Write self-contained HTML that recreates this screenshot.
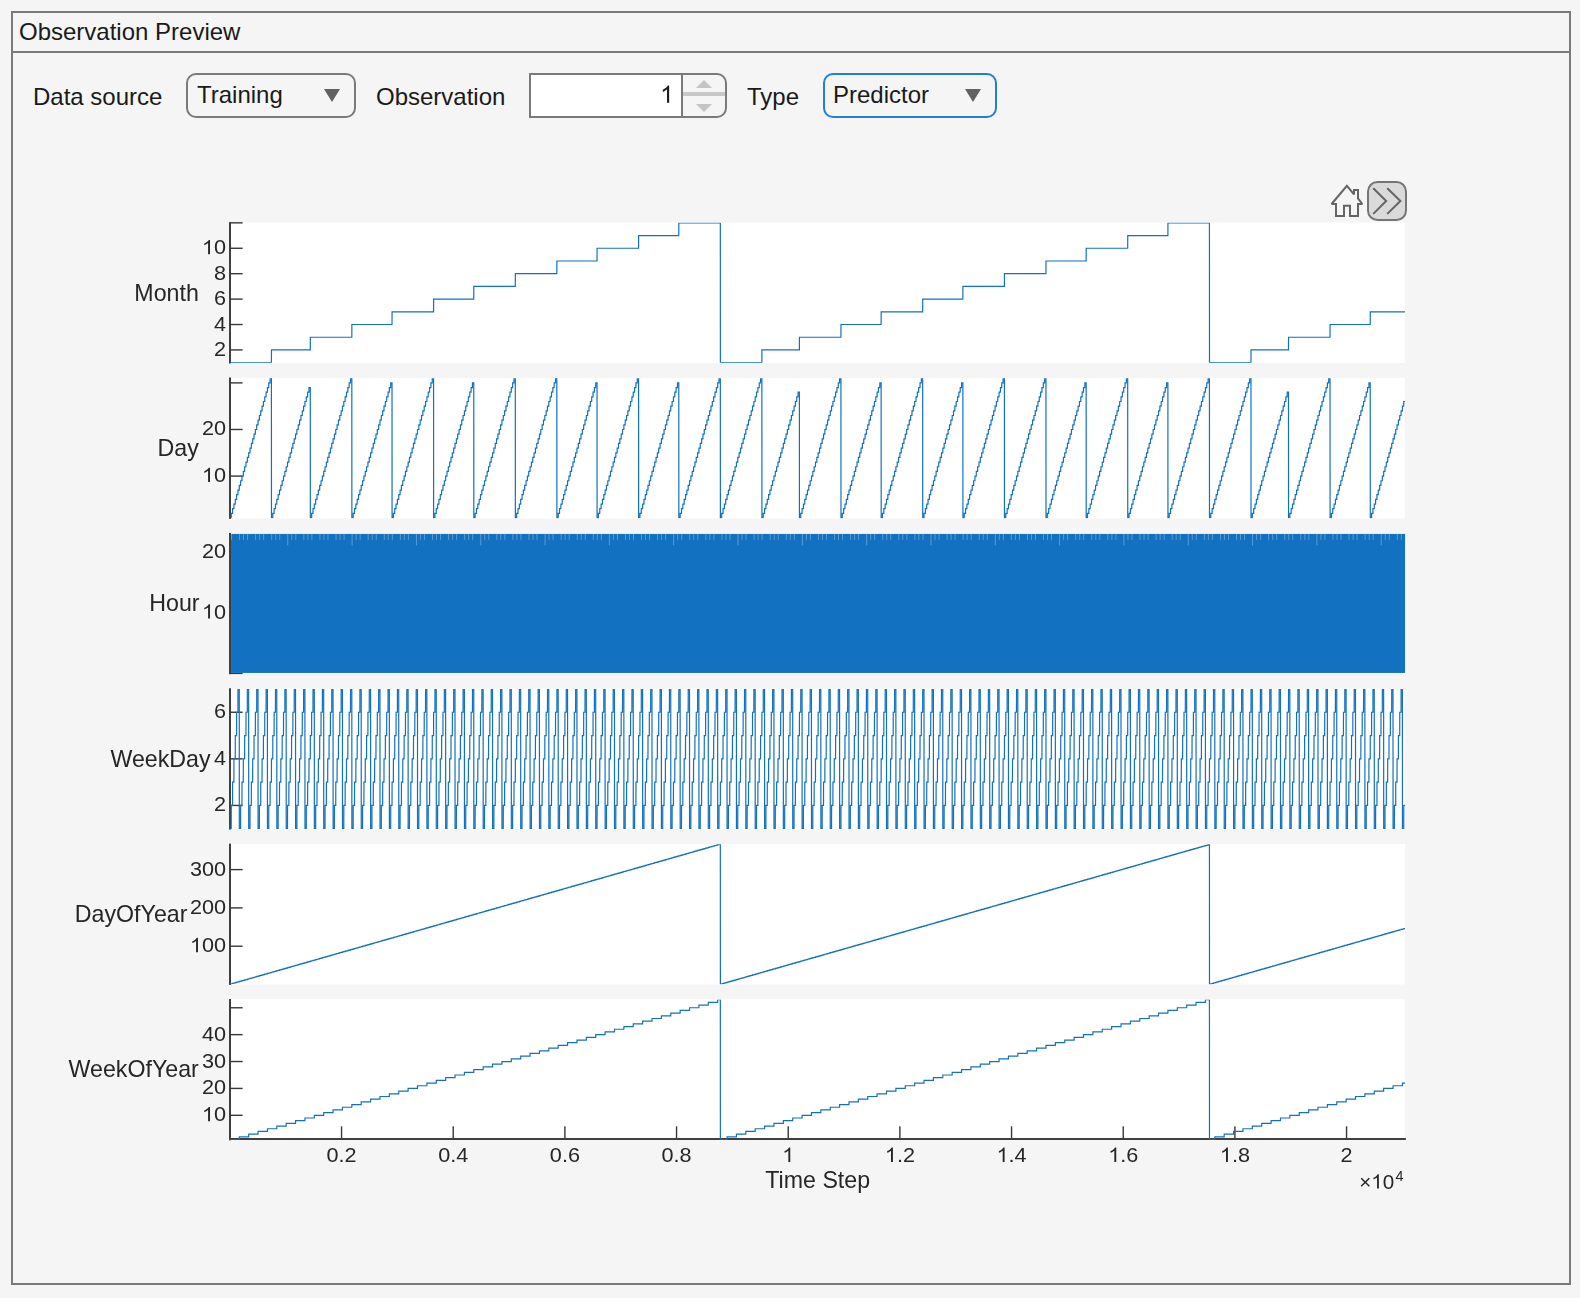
<!DOCTYPE html>
<html><head><meta charset="utf-8"><title>Observation Preview</title>
<style>
html,body{margin:0;padding:0}
body{width:1580px;height:1298px;background:#f5f5f5;position:relative;overflow:hidden;font-family:"Liberation Sans",sans-serif;color:#1a1a1a}
.panel{position:absolute;left:11px;top:11px;width:1556px;height:1270px;border:2px solid #7a7a7a}
.sep{position:absolute;left:13px;top:51px;width:1556px;height:2px;background:#7a7a7a}
.t{position:absolute;white-space:nowrap;font-size:24px;line-height:28px}
.dd{position:absolute;box-sizing:border-box;border:2px solid #7a7a7a;border-radius:10px;height:45px;top:73px;background:#f5f5f5}
.tri{position:absolute;width:0;height:0;border-left:8px solid transparent;border-right:8px solid transparent;border-top:13px solid #616161}
svg text{font-family:"Liberation Sans",sans-serif}
</style></head><body>
<div class="panel"></div><div class="sep"></div>
<div class="t" style="left:19px;top:18px">Observation Preview</div>
<div class="t" style="left:33px;top:83px">Data source</div>
<div class="dd" style="left:186px;width:170px"></div>
<div class="t" style="left:197px;top:81px">Training</div>
<div class="tri" style="left:324px;top:89px"></div>
<div class="t" style="left:376px;top:83px">Observation</div>
<div style="position:absolute;left:529px;top:73px;width:198px;height:45px;box-sizing:border-box;border:2px solid #7a7a7a;border-radius:0 10px 10px 0;background:#f5f5f5"></div>
<div style="position:absolute;left:531px;top:75px;width:150px;height:41px;background:#fff;border-right:2px solid #7a7a7a"></div>
<div style="position:absolute;left:683px;top:92px;width:42px;height:4px;background:#c8c8c8"></div>
<div class="tri" style="left:696px;top:80px;border-left-width:8px;border-right-width:8px;border-top:0;border-bottom:8px solid #c4c4c4"></div>
<div class="tri" style="left:696px;top:104px;border-left-width:8px;border-right-width:8px;border-top:8px solid #c4c4c4"></div>
<div class="t" style="left:747px;top:83px">Type</div>
<div class="dd" style="left:823px;width:174px;border-color:#1f7fd9"></div>
<div class="t" style="left:833px;top:81px">Predictor</div>
<div class="tri" style="left:965px;top:89px"></div>
<svg width="1580" height="1298" style="position:absolute;left:0;top:0;will-change:transform">
<defs>
<clipPath id="c0"><rect x="229.28" y="222.85" width="1175.99" height="139.95"/></clipPath>
<clipPath id="c1"><rect x="229.28" y="378.22" width="1175.99" height="139.95"/></clipPath>
<clipPath id="c2"><rect x="229.28" y="533.59" width="1175.99" height="139.95"/></clipPath>
<clipPath id="c3"><rect x="229.28" y="688.96" width="1175.99" height="139.95"/></clipPath>
<clipPath id="c4"><rect x="229.28" y="844.33" width="1175.99" height="139.95"/></clipPath>
<clipPath id="c5"><rect x="229.28" y="999.7" width="1175.99" height="139.95"/></clipPath>
</defs>
<rect x="229.88" y="222.55" width="1175.19" height="140.5" fill="#fff"/>
<rect x="229.88" y="377.92" width="1175.19" height="140.5" fill="#fff"/>
<rect x="229.88" y="533.29" width="1175.19" height="140.5" fill="#fff"/>
<rect x="229.88" y="688.66" width="1175.19" height="140.5" fill="#fff"/>
<rect x="229.88" y="844.03" width="1175.19" height="140.5" fill="#fff"/>
<rect x="229.88" y="999.4" width="1175.19" height="140.5" fill="#fff"/>
<rect x="229" y="222.15" width="2" height="141.3" fill="#404040"/>
<rect x="230" y="349.24" width="12.6" height="1.4" fill="#383838"/>
<g transform="translate(226 355.94) scale(1.05 1)" fill="#262626"><text x="-11.46" y="0" font-size="20.6">2</text></g>
<rect x="230" y="323.82" width="12.6" height="1.4" fill="#383838"/>
<g transform="translate(226 330.52) scale(1.05 1)" fill="#262626"><text x="-11.46" y="0" font-size="20.6">4</text></g>
<rect x="230" y="298.4" width="12.6" height="1.4" fill="#383838"/>
<g transform="translate(226 305.1) scale(1.05 1)" fill="#262626"><text x="-11.46" y="0" font-size="20.6">6</text></g>
<rect x="230" y="272.99" width="12.6" height="1.4" fill="#383838"/>
<g transform="translate(226 279.69) scale(1.05 1)" fill="#262626"><text x="-11.46" y="0" font-size="20.6">8</text></g>
<rect x="230" y="247.57" width="12.6" height="1.4" fill="#383838"/>
<g transform="translate(226 254.27) scale(1.05 1)" fill="#262626"><path transform="translate(-22.91 0) scale(0.010059 -0.009772)" d="M583 0V1147Q518 1085 412 1023Q307 961 223 930V1104Q374 1175 487 1276Q600 1377 647 1472H763V0Z"/><text x="-11.46" y="0" font-size="20.6">0</text></g>
<rect x="230" y="222.15" width="12.6" height="1.4" fill="#383838"/>
<text x="198.8" y="300.85" font-size="23.2" text-anchor="end" fill="#262626">Month</text>
<rect x="229" y="377.52" width="2" height="141.3" fill="#404040"/>
<rect x="230" y="475.38" width="12.6" height="1.4" fill="#383838"/>
<g transform="translate(226 482.08) scale(1.05 1)" fill="#262626"><path transform="translate(-22.91 0) scale(0.010059 -0.009772)" d="M583 0V1147Q518 1085 412 1023Q307 961 223 930V1104Q374 1175 487 1276Q600 1377 647 1472H763V0Z"/><text x="-11.46" y="0" font-size="20.6">0</text></g>
<rect x="230" y="428.78" width="12.6" height="1.4" fill="#383838"/>
<g transform="translate(226 435.48) scale(1.05 1)" fill="#262626"><text x="-22.91" y="0" font-size="20.6">20</text></g>
<rect x="230" y="382.18" width="12.6" height="1.4" fill="#383838"/>
<text x="198.8" y="455.72" font-size="23.2" text-anchor="end" fill="#262626">Day</text>
<rect x="229" y="532.89" width="2" height="141.3" fill="#404040"/>
<rect x="230" y="672.69" width="12.6" height="1.4" fill="#383838"/>
<rect x="230" y="611.91" width="12.6" height="1.4" fill="#383838"/>
<g transform="translate(226 618.61) scale(1.05 1)" fill="#262626"><path transform="translate(-22.91 0) scale(0.010059 -0.009772)" d="M583 0V1147Q518 1085 412 1023Q307 961 223 930V1104Q374 1175 487 1276Q600 1377 647 1472H763V0Z"/><text x="-11.46" y="0" font-size="20.6">0</text></g>
<rect x="230" y="551.12" width="12.6" height="1.4" fill="#383838"/>
<g transform="translate(226 557.82) scale(1.05 1)" fill="#262626"><text x="-22.91" y="0" font-size="20.6">20</text></g>
<text x="199.6" y="610.59" font-size="23.2" text-anchor="end" fill="#262626">Hour</text>
<rect x="229" y="688.26" width="2" height="141.3" fill="#404040"/>
<rect x="230" y="804.76" width="12.6" height="1.4" fill="#383838"/>
<g transform="translate(226 811.46) scale(1.05 1)" fill="#262626"><text x="-11.46" y="0" font-size="20.6">2</text></g>
<rect x="230" y="758.16" width="12.6" height="1.4" fill="#383838"/>
<g transform="translate(226 764.86) scale(1.05 1)" fill="#262626"><text x="-11.46" y="0" font-size="20.6">4</text></g>
<rect x="230" y="711.56" width="12.6" height="1.4" fill="#383838"/>
<g transform="translate(226 718.26) scale(1.05 1)" fill="#262626"><text x="-11.46" y="0" font-size="20.6">6</text></g>
<text x="210.6" y="766.96" font-size="23.2" text-anchor="end" fill="#262626">WeekDay</text>
<rect x="229" y="843.63" width="2" height="141.3" fill="#404040"/>
<rect x="230" y="945.51" width="12.6" height="1.4" fill="#383838"/>
<g transform="translate(226 952.21) scale(1.05 1)" fill="#262626"><path transform="translate(-34.37 0) scale(0.010059 -0.009772)" d="M583 0V1147Q518 1085 412 1023Q307 961 223 930V1104Q374 1175 487 1276Q600 1377 647 1472H763V0Z"/><text x="-22.91" y="0" font-size="20.6">00</text></g>
<rect x="230" y="907.21" width="12.6" height="1.4" fill="#383838"/>
<g transform="translate(226 913.91) scale(1.05 1)" fill="#262626"><text x="-34.37" y="0" font-size="20.6">200</text></g>
<rect x="230" y="868.91" width="12.6" height="1.4" fill="#383838"/>
<g transform="translate(226 875.61) scale(1.05 1)" fill="#262626"><text x="-34.37" y="0" font-size="20.6">300</text></g>
<text x="187.4" y="921.73" font-size="23.2" text-anchor="end" fill="#262626">DayOfYear</text>
<rect x="229" y="999" width="2" height="141.3" fill="#404040"/>
<rect x="230" y="1114.6" width="12.6" height="1.4" fill="#383838"/>
<g transform="translate(226 1121.3) scale(1.05 1)" fill="#262626"><path transform="translate(-22.91 0) scale(0.010059 -0.009772)" d="M583 0V1147Q518 1085 412 1023Q307 961 223 930V1104Q374 1175 487 1276Q600 1377 647 1472H763V0Z"/><text x="-11.46" y="0" font-size="20.6">0</text></g>
<rect x="230" y="1087.72" width="12.6" height="1.4" fill="#383838"/>
<g transform="translate(226 1094.42) scale(1.05 1)" fill="#262626"><text x="-22.91" y="0" font-size="20.6">20</text></g>
<rect x="230" y="1060.83" width="12.6" height="1.4" fill="#383838"/>
<g transform="translate(226 1067.53) scale(1.05 1)" fill="#262626"><text x="-22.91" y="0" font-size="20.6">30</text></g>
<rect x="230" y="1033.95" width="12.6" height="1.4" fill="#383838"/>
<g transform="translate(226 1040.65) scale(1.05 1)" fill="#262626"><text x="-22.91" y="0" font-size="20.6">40</text></g>
<rect x="230" y="1007.07" width="12.6" height="1.4" fill="#383838"/>
<text x="198.8" y="1076.6" font-size="23.2" text-anchor="end" fill="#262626">WeekOfYear</text>
<rect x="229" y="1138" width="1176.87" height="2" fill="#404040"/>
<rect x="340.85" y="1126.3" width="1.4" height="12" fill="#383838"/>
<g transform="translate(341.55 1161.9) scale(1.05 1)" fill="#262626"><text x="-14.32" y="0" font-size="20.6">0.2</text></g>
<rect x="452.52" y="1126.3" width="1.4" height="12" fill="#383838"/>
<g transform="translate(453.22 1161.9) scale(1.05 1)" fill="#262626"><text x="-14.32" y="0" font-size="20.6">0.4</text></g>
<rect x="564.18" y="1126.3" width="1.4" height="12" fill="#383838"/>
<g transform="translate(564.88 1161.9) scale(1.05 1)" fill="#262626"><text x="-14.32" y="0" font-size="20.6">0.6</text></g>
<rect x="675.85" y="1126.3" width="1.4" height="12" fill="#383838"/>
<g transform="translate(676.55 1161.9) scale(1.05 1)" fill="#262626"><text x="-14.32" y="0" font-size="20.6">0.8</text></g>
<rect x="787.52" y="1126.3" width="1.4" height="12" fill="#383838"/>
<g transform="translate(788.22 1161.9) scale(1.05 1)" fill="#262626"><path transform="translate(-5.73 0) scale(0.010059 -0.009772)" d="M583 0V1147Q518 1085 412 1023Q307 961 223 930V1104Q374 1175 487 1276Q600 1377 647 1472H763V0Z"/></g>
<rect x="899.19" y="1126.3" width="1.4" height="12" fill="#383838"/>
<g transform="translate(899.89 1161.9) scale(1.05 1)" fill="#262626"><path transform="translate(-14.32 0) scale(0.010059 -0.009772)" d="M583 0V1147Q518 1085 412 1023Q307 961 223 930V1104Q374 1175 487 1276Q600 1377 647 1472H763V0Z"/><text x="-2.86" y="0" font-size="20.6">.2</text></g>
<rect x="1010.86" y="1126.3" width="1.4" height="12" fill="#383838"/>
<g transform="translate(1011.56 1161.9) scale(1.05 1)" fill="#262626"><path transform="translate(-14.32 0) scale(0.010059 -0.009772)" d="M583 0V1147Q518 1085 412 1023Q307 961 223 930V1104Q374 1175 487 1276Q600 1377 647 1472H763V0Z"/><text x="-2.86" y="0" font-size="20.6">.4</text></g>
<rect x="1122.52" y="1126.3" width="1.4" height="12" fill="#383838"/>
<g transform="translate(1123.22 1161.9) scale(1.05 1)" fill="#262626"><path transform="translate(-14.32 0) scale(0.010059 -0.009772)" d="M583 0V1147Q518 1085 412 1023Q307 961 223 930V1104Q374 1175 487 1276Q600 1377 647 1472H763V0Z"/><text x="-2.86" y="0" font-size="20.6">.6</text></g>
<rect x="1234.19" y="1126.3" width="1.4" height="12" fill="#383838"/>
<g transform="translate(1234.89 1161.9) scale(1.05 1)" fill="#262626"><path transform="translate(-14.32 0) scale(0.010059 -0.009772)" d="M583 0V1147Q518 1085 412 1023Q307 961 223 930V1104Q374 1175 487 1276Q600 1377 647 1472H763V0Z"/><text x="-2.86" y="0" font-size="20.6">.8</text></g>
<rect x="1345.86" y="1126.3" width="1.4" height="12" fill="#383838"/>
<g transform="translate(1346.56 1161.9) scale(1.05 1)" fill="#262626"><text x="-5.73" y="0" font-size="20.6">2</text></g>
<text x="817.7" y="1187.8" font-size="23.2" text-anchor="middle" fill="#262626">Time Step</text>
<g transform="translate(1394.1 1188.6) scale(1.0 1)" fill="#262626"><text x="-34.94" y="0" font-size="20.6">×</text><path transform="translate(-22.91 0) scale(0.010059 -0.009772)" d="M583 0V1147Q518 1085 412 1023Q307 961 223 930V1104Q374 1175 487 1276Q600 1377 647 1472H763V0Z"/><text x="-11.46" y="0" font-size="20.6">0</text></g>
<text x="1395.6" y="1181" font-size="14.4" fill="#262626">4</text>
<g fill="none" stroke="#1171BE" stroke-width="1.2" stroke-linejoin="miter">
<path clip-path="url(#c0)" d="M229.94 362.65 L271.42 362.65 L271.48 349.94 L310.28 349.94 L310.34 337.23 L351.82 337.23 L351.88 324.52 L392.02 324.52 L392.08 311.81 L433.56 311.81 L433.62 299.1 L473.76 299.1 L473.82 286.4 L515.3 286.4 L515.36 273.69 L556.84 273.69 L556.9 260.98 L597.04 260.98 L597.1 248.27 L638.58 248.27 L638.64 235.56 L678.79 235.56 L678.84 222.85 L720.33 222.85 L720.38 362.65 L761.87 362.65 L761.92 349.94 L799.39 349.94 L799.44 337.23 L840.93 337.23 L840.98 324.52 L881.13 324.52 L881.18 311.81 L922.67 311.81 L922.72 299.1 L962.87 299.1 L962.92 286.4 L1004.41 286.4 L1004.47 273.69 L1045.95 273.69 L1046.01 260.98 L1086.15 260.98 L1086.21 248.27 L1127.69 248.27 L1127.75 235.56 L1167.89 235.56 L1167.95 222.85 L1209.43 222.85 L1209.49 362.65 L1250.97 362.65 L1251.03 349.94 L1288.49 349.94 L1288.55 337.23 L1330.03 337.23 L1330.09 324.52 L1370.23 324.52 L1370.29 311.81 L1405.07 311.81"/>
<path clip-path="url(#c1)" d="M229.94 518.02 L231.22 518.02 L231.28 513.36 L232.56 513.36 L232.62 508.7 L233.9 508.7 L233.96 504.04 L235.24 504.04 L235.3 499.38 L236.58 499.38 L236.64 494.72 L237.92 494.72 L237.98 490.06 L239.26 490.06 L239.32 485.4 L240.6 485.4 L240.66 480.74 L241.94 480.74 L242 476.08 L243.28 476.08 L243.34 471.42 L244.62 471.42 L244.68 466.76 L245.96 466.76 L246.02 462.1 L247.3 462.1 L247.36 457.44 L248.64 457.44 L248.7 452.78 L249.98 452.78 L250.04 448.12 L251.32 448.12 L251.38 443.46 L252.66 443.46 L252.72 438.8 L254 438.8 L254.06 434.14 L255.34 434.14 L255.4 429.48 L256.68 429.48 L256.74 424.82 L258.02 424.82 L258.08 420.16 L259.36 420.16 L259.42 415.5 L260.7 415.5 L260.76 410.84 L262.04 410.84 L262.1 406.18 L263.38 406.18 L263.44 401.52 L264.72 401.52 L264.78 396.86 L266.06 396.86 L266.12 392.2 L267.4 392.2 L267.46 387.54 L268.74 387.54 L268.8 382.88 L270.08 382.88 L270.14 378.22 L271.42 378.22 L271.48 518.02 L272.76 518.02 L272.82 513.36 L274.1 513.36 L274.16 508.7 L275.44 508.7 L275.5 504.04 L276.78 504.04 L276.84 499.38 L278.12 499.38 L278.18 494.72 L279.46 494.72 L279.52 490.06 L280.8 490.06 L280.86 485.4 L282.14 485.4 L282.2 480.74 L283.48 480.74 L283.54 476.08 L284.82 476.08 L284.88 471.42 L286.16 471.42 L286.22 466.76 L287.5 466.76 L287.56 462.1 L288.84 462.1 L288.9 457.44 L290.18 457.44 L290.24 452.78 L291.52 452.78 L291.58 448.12 L292.86 448.12 L292.92 443.46 L294.2 443.46 L294.26 438.8 L295.54 438.8 L295.6 434.14 L296.88 434.14 L296.94 429.48 L298.22 429.48 L298.28 424.82 L299.56 424.82 L299.62 420.16 L300.9 420.16 L300.96 415.5 L302.24 415.5 L302.3 410.84 L303.58 410.84 L303.64 406.18 L304.92 406.18 L304.98 401.52 L306.26 401.52 L306.32 396.86 L307.6 396.86 L307.66 392.2 L308.94 392.2 L309 387.54 L310.28 387.54 L310.34 518.02 L311.62 518.02 L311.68 513.36 L312.96 513.36 L313.02 508.7 L314.3 508.7 L314.36 504.04 L315.64 504.04 L315.7 499.38 L316.98 499.38 L317.04 494.72 L318.32 494.72 L318.38 490.06 L319.66 490.06 L319.72 485.4 L321 485.4 L321.06 480.74 L322.34 480.74 L322.4 476.08 L323.68 476.08 L323.74 471.42 L325.02 471.42 L325.08 466.76 L326.36 466.76 L326.42 462.1 L327.7 462.1 L327.76 457.44 L329.04 457.44 L329.1 452.78 L330.38 452.78 L330.44 448.12 L331.72 448.12 L331.78 443.46 L333.06 443.46 L333.12 438.8 L334.4 438.8 L334.46 434.14 L335.74 434.14 L335.8 429.48 L337.08 429.48 L337.14 424.82 L338.42 424.82 L338.48 420.16 L339.76 420.16 L339.82 415.5 L341.1 415.5 L341.16 410.84 L342.44 410.84 L342.5 406.18 L343.78 406.18 L343.84 401.52 L345.12 401.52 L345.18 396.86 L346.46 396.86 L346.52 392.2 L347.8 392.2 L347.86 387.54 L349.14 387.54 L349.2 382.88 L350.48 382.88 L350.54 378.22 L351.82 378.22 L351.88 518.02 L353.16 518.02 L353.22 513.36 L354.5 513.36 L354.56 508.7 L355.84 508.7 L355.9 504.04 L357.18 504.04 L357.24 499.38 L358.52 499.38 L358.58 494.72 L359.86 494.72 L359.92 490.06 L361.2 490.06 L361.26 485.4 L362.54 485.4 L362.6 480.74 L363.88 480.74 L363.94 476.08 L365.22 476.08 L365.28 471.42 L366.56 471.42 L366.62 466.76 L367.9 466.76 L367.96 462.1 L369.24 462.1 L369.3 457.44 L370.58 457.44 L370.64 452.78 L371.92 452.78 L371.98 448.12 L373.26 448.12 L373.32 443.46 L374.6 443.46 L374.66 438.8 L375.94 438.8 L376 434.14 L377.28 434.14 L377.34 429.48 L378.62 429.48 L378.68 424.82 L379.96 424.82 L380.02 420.16 L381.3 420.16 L381.36 415.5 L382.64 415.5 L382.7 410.84 L383.98 410.84 L384.04 406.18 L385.32 406.18 L385.38 401.52 L386.66 401.52 L386.72 396.86 L388 396.86 L388.06 392.2 L389.34 392.2 L389.4 387.54 L390.68 387.54 L390.74 382.88 L392.02 382.88 L392.08 518.02 L393.36 518.02 L393.42 513.36 L394.7 513.36 L394.76 508.7 L396.04 508.7 L396.1 504.04 L397.38 504.04 L397.44 499.38 L398.72 499.38 L398.78 494.72 L400.06 494.72 L400.12 490.06 L401.4 490.06 L401.46 485.4 L402.74 485.4 L402.8 480.74 L404.08 480.74 L404.14 476.08 L405.42 476.08 L405.48 471.42 L406.76 471.42 L406.82 466.76 L408.1 466.76 L408.16 462.1 L409.44 462.1 L409.5 457.44 L410.78 457.44 L410.84 452.78 L412.12 452.78 L412.18 448.12 L413.46 448.12 L413.52 443.46 L414.8 443.46 L414.86 438.8 L416.14 438.8 L416.2 434.14 L417.48 434.14 L417.54 429.48 L418.82 429.48 L418.88 424.82 L420.16 424.82 L420.22 420.16 L421.5 420.16 L421.56 415.5 L422.84 415.5 L422.9 410.84 L424.18 410.84 L424.24 406.18 L425.52 406.18 L425.58 401.52 L426.86 401.52 L426.92 396.86 L428.2 396.86 L428.26 392.2 L429.54 392.2 L429.6 387.54 L430.88 387.54 L430.94 382.88 L432.22 382.88 L432.28 378.22 L433.56 378.22 L433.62 518.02 L434.9 518.02 L434.96 513.36 L436.24 513.36 L436.3 508.7 L437.58 508.7 L437.64 504.04 L438.92 504.04 L438.98 499.38 L440.26 499.38 L440.32 494.72 L441.6 494.72 L441.66 490.06 L442.94 490.06 L443 485.4 L444.28 485.4 L444.34 480.74 L445.62 480.74 L445.68 476.08 L446.96 476.08 L447.02 471.42 L448.3 471.42 L448.36 466.76 L449.64 466.76 L449.7 462.1 L450.98 462.1 L451.04 457.44 L452.32 457.44 L452.38 452.78 L453.66 452.78 L453.72 448.12 L455 448.12 L455.06 443.46 L456.34 443.46 L456.4 438.8 L457.68 438.8 L457.74 434.14 L459.02 434.14 L459.08 429.48 L460.36 429.48 L460.42 424.82 L461.7 424.82 L461.76 420.16 L463.04 420.16 L463.1 415.5 L464.38 415.5 L464.44 410.84 L465.72 410.84 L465.78 406.18 L467.06 406.18 L467.12 401.52 L468.4 401.52 L468.46 396.86 L469.74 396.86 L469.8 392.2 L471.08 392.2 L471.14 387.54 L472.42 387.54 L472.48 382.88 L473.76 382.88 L473.82 518.02 L475.1 518.02 L475.16 513.36 L476.44 513.36 L476.5 508.7 L477.78 508.7 L477.84 504.04 L479.12 504.04 L479.18 499.38 L480.46 499.38 L480.52 494.72 L481.8 494.72 L481.86 490.06 L483.14 490.06 L483.2 485.4 L484.48 485.4 L484.54 480.74 L485.82 480.74 L485.88 476.08 L487.16 476.08 L487.22 471.42 L488.5 471.42 L488.56 466.76 L489.84 466.76 L489.9 462.1 L491.18 462.1 L491.24 457.44 L492.52 457.44 L492.58 452.78 L493.86 452.78 L493.92 448.12 L495.2 448.12 L495.26 443.46 L496.54 443.46 L496.6 438.8 L497.88 438.8 L497.94 434.14 L499.22 434.14 L499.28 429.48 L500.56 429.48 L500.62 424.82 L501.9 424.82 L501.96 420.16 L503.24 420.16 L503.3 415.5 L504.58 415.5 L504.64 410.84 L505.92 410.84 L505.98 406.18 L507.26 406.18 L507.32 401.52 L508.6 401.52 L508.66 396.86 L509.94 396.86 L510 392.2 L511.28 392.2 L511.34 387.54 L512.62 387.54 L512.68 382.88 L513.96 382.88 L514.02 378.22 L515.3 378.22 L515.36 518.02 L516.64 518.02 L516.7 513.36 L517.98 513.36 L518.04 508.7 L519.32 508.7 L519.38 504.04 L520.66 504.04 L520.72 499.38 L522 499.38 L522.06 494.72 L523.34 494.72 L523.4 490.06 L524.68 490.06 L524.74 485.4 L526.02 485.4 L526.08 480.74 L527.36 480.74 L527.42 476.08 L528.7 476.08 L528.76 471.42 L530.04 471.42 L530.1 466.76 L531.38 466.76 L531.44 462.1 L532.72 462.1 L532.78 457.44 L534.06 457.44 L534.12 452.78 L535.4 452.78 L535.46 448.12 L536.74 448.12 L536.8 443.46 L538.08 443.46 L538.14 438.8 L539.42 438.8 L539.48 434.14 L540.76 434.14 L540.82 429.48 L542.1 429.48 L542.16 424.82 L543.44 424.82 L543.5 420.16 L544.78 420.16 L544.84 415.5 L546.12 415.5 L546.18 410.84 L547.46 410.84 L547.52 406.18 L548.8 406.18 L548.86 401.52 L550.14 401.52 L550.2 396.86 L551.48 396.86 L551.54 392.2 L552.82 392.2 L552.88 387.54 L554.16 387.54 L554.22 382.88 L555.5 382.88 L555.56 378.22 L556.84 378.22 L556.9 518.02 L558.18 518.02 L558.24 513.36 L559.52 513.36 L559.58 508.7 L560.86 508.7 L560.92 504.04 L562.2 504.04 L562.26 499.38 L563.54 499.38 L563.6 494.72 L564.88 494.72 L564.94 490.06 L566.22 490.06 L566.28 485.4 L567.56 485.4 L567.62 480.74 L568.9 480.74 L568.96 476.08 L570.24 476.08 L570.3 471.42 L571.58 471.42 L571.64 466.76 L572.92 466.76 L572.98 462.1 L574.26 462.1 L574.32 457.44 L575.6 457.44 L575.66 452.78 L576.94 452.78 L577 448.12 L578.28 448.12 L578.34 443.46 L579.62 443.46 L579.68 438.8 L580.96 438.8 L581.02 434.14 L582.3 434.14 L582.36 429.48 L583.64 429.48 L583.7 424.82 L584.98 424.82 L585.04 420.16 L586.32 420.16 L586.38 415.5 L587.66 415.5 L587.72 410.84 L589 410.84 L589.06 406.18 L590.34 406.18 L590.4 401.52 L591.68 401.52 L591.74 396.86 L593.02 396.86 L593.08 392.2 L594.36 392.2 L594.42 387.54 L595.7 387.54 L595.76 382.88 L597.04 382.88 L597.1 518.02 L598.38 518.02 L598.44 513.36 L599.72 513.36 L599.78 508.7 L601.06 508.7 L601.12 504.04 L602.4 504.04 L602.46 499.38 L603.74 499.38 L603.8 494.72 L605.08 494.72 L605.14 490.06 L606.42 490.06 L606.48 485.4 L607.76 485.4 L607.82 480.74 L609.1 480.74 L609.16 476.08 L610.44 476.08 L610.5 471.42 L611.78 471.42 L611.84 466.76 L613.12 466.76 L613.18 462.1 L614.46 462.1 L614.52 457.44 L615.8 457.44 L615.86 452.78 L617.14 452.78 L617.2 448.12 L618.48 448.12 L618.54 443.46 L619.82 443.46 L619.88 438.8 L621.16 438.8 L621.22 434.14 L622.5 434.14 L622.56 429.48 L623.84 429.48 L623.9 424.82 L625.18 424.82 L625.24 420.16 L626.52 420.16 L626.58 415.5 L627.86 415.5 L627.92 410.84 L629.2 410.84 L629.26 406.18 L630.54 406.18 L630.6 401.52 L631.88 401.52 L631.94 396.86 L633.22 396.86 L633.28 392.2 L634.56 392.2 L634.62 387.54 L635.9 387.54 L635.96 382.88 L637.24 382.88 L637.3 378.22 L638.58 378.22 L638.64 518.02 L639.92 518.02 L639.98 513.36 L641.26 513.36 L641.32 508.7 L642.6 508.7 L642.66 504.04 L643.94 504.04 L644 499.38 L645.28 499.38 L645.34 494.72 L646.62 494.72 L646.68 490.06 L647.96 490.06 L648.02 485.4 L649.31 485.4 L649.36 480.74 L650.65 480.74 L650.7 476.08 L651.99 476.08 L652.04 471.42 L653.33 471.42 L653.38 466.76 L654.67 466.76 L654.72 462.1 L656.01 462.1 L656.06 457.44 L657.35 457.44 L657.4 452.78 L658.69 452.78 L658.74 448.12 L660.03 448.12 L660.08 443.46 L661.37 443.46 L661.42 438.8 L662.71 438.8 L662.76 434.14 L664.05 434.14 L664.1 429.48 L665.39 429.48 L665.44 424.82 L666.73 424.82 L666.78 420.16 L668.07 420.16 L668.12 415.5 L669.41 415.5 L669.46 410.84 L670.75 410.84 L670.8 406.18 L672.09 406.18 L672.14 401.52 L673.43 401.52 L673.48 396.86 L674.77 396.86 L674.82 392.2 L676.11 392.2 L676.16 387.54 L677.45 387.54 L677.5 382.88 L678.79 382.88 L678.84 518.02 L680.13 518.02 L680.18 513.36 L681.47 513.36 L681.52 508.7 L682.81 508.7 L682.86 504.04 L684.15 504.04 L684.2 499.38 L685.49 499.38 L685.54 494.72 L686.83 494.72 L686.88 490.06 L688.17 490.06 L688.22 485.4 L689.51 485.4 L689.56 480.74 L690.85 480.74 L690.9 476.08 L692.19 476.08 L692.24 471.42 L693.53 471.42 L693.58 466.76 L694.87 466.76 L694.92 462.1 L696.21 462.1 L696.26 457.44 L697.55 457.44 L697.6 452.78 L698.89 452.78 L698.94 448.12 L700.23 448.12 L700.28 443.46 L701.57 443.46 L701.62 438.8 L702.91 438.8 L702.96 434.14 L704.25 434.14 L704.3 429.48 L705.59 429.48 L705.64 424.82 L706.93 424.82 L706.98 420.16 L708.27 420.16 L708.32 415.5 L709.61 415.5 L709.66 410.84 L710.95 410.84 L711 406.18 L712.29 406.18 L712.34 401.52 L713.63 401.52 L713.68 396.86 L714.97 396.86 L715.02 392.2 L716.31 392.2 L716.36 387.54 L717.65 387.54 L717.7 382.88 L718.99 382.88 L719.04 378.22 L720.33 378.22 L720.38 518.02 L721.67 518.02 L721.72 513.36 L723.01 513.36 L723.06 508.7 L724.35 508.7 L724.4 504.04 L725.69 504.04 L725.74 499.38 L727.03 499.38 L727.08 494.72 L728.37 494.72 L728.42 490.06 L729.71 490.06 L729.76 485.4 L731.05 485.4 L731.1 480.74 L732.39 480.74 L732.44 476.08 L733.73 476.08 L733.78 471.42 L735.07 471.42 L735.12 466.76 L736.41 466.76 L736.46 462.1 L737.75 462.1 L737.8 457.44 L739.09 457.44 L739.14 452.78 L740.43 452.78 L740.48 448.12 L741.77 448.12 L741.82 443.46 L743.11 443.46 L743.16 438.8 L744.45 438.8 L744.5 434.14 L745.79 434.14 L745.84 429.48 L747.13 429.48 L747.18 424.82 L748.47 424.82 L748.52 420.16 L749.81 420.16 L749.86 415.5 L751.15 415.5 L751.2 410.84 L752.49 410.84 L752.54 406.18 L753.83 406.18 L753.88 401.52 L755.17 401.52 L755.22 396.86 L756.51 396.86 L756.56 392.2 L757.85 392.2 L757.9 387.54 L759.19 387.54 L759.24 382.88 L760.53 382.88 L760.58 378.22 L761.87 378.22 L761.92 518.02 L763.21 518.02 L763.26 513.36 L764.55 513.36 L764.6 508.7 L765.89 508.7 L765.94 504.04 L767.23 504.04 L767.28 499.38 L768.57 499.38 L768.62 494.72 L769.91 494.72 L769.96 490.06 L771.25 490.06 L771.3 485.4 L772.59 485.4 L772.64 480.74 L773.93 480.74 L773.98 476.08 L775.27 476.08 L775.32 471.42 L776.61 471.42 L776.66 466.76 L777.95 466.76 L778 462.1 L779.29 462.1 L779.34 457.44 L780.63 457.44 L780.68 452.78 L781.97 452.78 L782.02 448.12 L783.31 448.12 L783.36 443.46 L784.65 443.46 L784.7 438.8 L785.99 438.8 L786.04 434.14 L787.33 434.14 L787.38 429.48 L788.67 429.48 L788.72 424.82 L790.01 424.82 L790.06 420.16 L791.35 420.16 L791.4 415.5 L792.69 415.5 L792.74 410.84 L794.03 410.84 L794.08 406.18 L795.37 406.18 L795.42 401.52 L796.71 401.52 L796.76 396.86 L798.05 396.86 L798.1 392.2 L799.39 392.2 L799.44 518.02 L800.73 518.02 L800.78 513.36 L802.07 513.36 L802.12 508.7 L803.41 508.7 L803.46 504.04 L804.75 504.04 L804.8 499.38 L806.09 499.38 L806.14 494.72 L807.43 494.72 L807.48 490.06 L808.77 490.06 L808.82 485.4 L810.11 485.4 L810.16 480.74 L811.45 480.74 L811.5 476.08 L812.79 476.08 L812.84 471.42 L814.13 471.42 L814.18 466.76 L815.47 466.76 L815.52 462.1 L816.81 462.1 L816.86 457.44 L818.15 457.44 L818.2 452.78 L819.49 452.78 L819.54 448.12 L820.83 448.12 L820.88 443.46 L822.17 443.46 L822.22 438.8 L823.51 438.8 L823.56 434.14 L824.85 434.14 L824.9 429.48 L826.19 429.48 L826.24 424.82 L827.53 424.82 L827.58 420.16 L828.87 420.16 L828.92 415.5 L830.21 415.5 L830.26 410.84 L831.55 410.84 L831.6 406.18 L832.89 406.18 L832.94 401.52 L834.23 401.52 L834.28 396.86 L835.57 396.86 L835.62 392.2 L836.91 392.2 L836.96 387.54 L838.25 387.54 L838.3 382.88 L839.59 382.88 L839.64 378.22 L840.93 378.22 L840.98 518.02 L842.27 518.02 L842.32 513.36 L843.61 513.36 L843.66 508.7 L844.95 508.7 L845 504.04 L846.29 504.04 L846.34 499.38 L847.63 499.38 L847.68 494.72 L848.97 494.72 L849.02 490.06 L850.31 490.06 L850.36 485.4 L851.65 485.4 L851.7 480.74 L852.99 480.74 L853.04 476.08 L854.33 476.08 L854.38 471.42 L855.67 471.42 L855.72 466.76 L857.01 466.76 L857.06 462.1 L858.35 462.1 L858.4 457.44 L859.69 457.44 L859.74 452.78 L861.03 452.78 L861.08 448.12 L862.37 448.12 L862.42 443.46 L863.71 443.46 L863.76 438.8 L865.05 438.8 L865.1 434.14 L866.39 434.14 L866.44 429.48 L867.73 429.48 L867.78 424.82 L869.07 424.82 L869.12 420.16 L870.41 420.16 L870.46 415.5 L871.75 415.5 L871.8 410.84 L873.09 410.84 L873.14 406.18 L874.43 406.18 L874.48 401.52 L875.77 401.52 L875.82 396.86 L877.11 396.86 L877.16 392.2 L878.45 392.2 L878.5 387.54 L879.79 387.54 L879.84 382.88 L881.13 382.88 L881.18 518.02 L882.47 518.02 L882.52 513.36 L883.81 513.36 L883.86 508.7 L885.15 508.7 L885.2 504.04 L886.49 504.04 L886.54 499.38 L887.83 499.38 L887.88 494.72 L889.17 494.72 L889.22 490.06 L890.51 490.06 L890.56 485.4 L891.85 485.4 L891.9 480.74 L893.19 480.74 L893.24 476.08 L894.53 476.08 L894.58 471.42 L895.87 471.42 L895.92 466.76 L897.21 466.76 L897.26 462.1 L898.55 462.1 L898.6 457.44 L899.89 457.44 L899.94 452.78 L901.23 452.78 L901.28 448.12 L902.57 448.12 L902.62 443.46 L903.91 443.46 L903.96 438.8 L905.25 438.8 L905.3 434.14 L906.59 434.14 L906.64 429.48 L907.93 429.48 L907.98 424.82 L909.27 424.82 L909.32 420.16 L910.61 420.16 L910.66 415.5 L911.95 415.5 L912 410.84 L913.29 410.84 L913.34 406.18 L914.63 406.18 L914.68 401.52 L915.97 401.52 L916.02 396.86 L917.31 396.86 L917.36 392.2 L918.65 392.2 L918.7 387.54 L919.99 387.54 L920.04 382.88 L921.33 382.88 L921.38 378.22 L922.67 378.22 L922.72 518.02 L924.01 518.02 L924.06 513.36 L925.35 513.36 L925.4 508.7 L926.69 508.7 L926.74 504.04 L928.03 504.04 L928.08 499.38 L929.37 499.38 L929.42 494.72 L930.71 494.72 L930.76 490.06 L932.05 490.06 L932.1 485.4 L933.39 485.4 L933.44 480.74 L934.73 480.74 L934.78 476.08 L936.07 476.08 L936.12 471.42 L937.41 471.42 L937.46 466.76 L938.75 466.76 L938.8 462.1 L940.09 462.1 L940.14 457.44 L941.43 457.44 L941.48 452.78 L942.77 452.78 L942.82 448.12 L944.11 448.12 L944.16 443.46 L945.45 443.46 L945.5 438.8 L946.79 438.8 L946.84 434.14 L948.13 434.14 L948.18 429.48 L949.47 429.48 L949.52 424.82 L950.81 424.82 L950.86 420.16 L952.15 420.16 L952.2 415.5 L953.49 415.5 L953.54 410.84 L954.83 410.84 L954.88 406.18 L956.17 406.18 L956.22 401.52 L957.51 401.52 L957.56 396.86 L958.85 396.86 L958.9 392.2 L960.19 392.2 L960.24 387.54 L961.53 387.54 L961.58 382.88 L962.87 382.88 L962.92 518.02 L964.21 518.02 L964.26 513.36 L965.55 513.36 L965.6 508.7 L966.89 508.7 L966.94 504.04 L968.23 504.04 L968.28 499.38 L969.57 499.38 L969.62 494.72 L970.91 494.72 L970.96 490.06 L972.25 490.06 L972.3 485.4 L973.59 485.4 L973.64 480.74 L974.93 480.74 L974.98 476.08 L976.27 476.08 L976.32 471.42 L977.61 471.42 L977.66 466.76 L978.95 466.76 L979 462.1 L980.29 462.1 L980.34 457.44 L981.63 457.44 L981.68 452.78 L982.97 452.78 L983.02 448.12 L984.31 448.12 L984.36 443.46 L985.65 443.46 L985.7 438.8 L986.99 438.8 L987.04 434.14 L988.33 434.14 L988.38 429.48 L989.67 429.48 L989.72 424.82 L991.01 424.82 L991.06 420.16 L992.35 420.16 L992.4 415.5 L993.69 415.5 L993.74 410.84 L995.03 410.84 L995.08 406.18 L996.37 406.18 L996.42 401.52 L997.71 401.52 L997.77 396.86 L999.05 396.86 L999.11 392.2 L1000.39 392.2 L1000.45 387.54 L1001.73 387.54 L1001.79 382.88 L1003.07 382.88 L1003.13 378.22 L1004.41 378.22 L1004.47 518.02 L1005.75 518.02 L1005.81 513.36 L1007.09 513.36 L1007.15 508.7 L1008.43 508.7 L1008.49 504.04 L1009.77 504.04 L1009.83 499.38 L1011.11 499.38 L1011.17 494.72 L1012.45 494.72 L1012.51 490.06 L1013.79 490.06 L1013.85 485.4 L1015.13 485.4 L1015.19 480.74 L1016.47 480.74 L1016.53 476.08 L1017.81 476.08 L1017.87 471.42 L1019.15 471.42 L1019.21 466.76 L1020.49 466.76 L1020.55 462.1 L1021.83 462.1 L1021.89 457.44 L1023.17 457.44 L1023.23 452.78 L1024.51 452.78 L1024.57 448.12 L1025.85 448.12 L1025.91 443.46 L1027.19 443.46 L1027.25 438.8 L1028.53 438.8 L1028.59 434.14 L1029.87 434.14 L1029.93 429.48 L1031.21 429.48 L1031.27 424.82 L1032.55 424.82 L1032.61 420.16 L1033.89 420.16 L1033.95 415.5 L1035.23 415.5 L1035.29 410.84 L1036.57 410.84 L1036.63 406.18 L1037.91 406.18 L1037.97 401.52 L1039.25 401.52 L1039.31 396.86 L1040.59 396.86 L1040.65 392.2 L1041.93 392.2 L1041.99 387.54 L1043.27 387.54 L1043.33 382.88 L1044.61 382.88 L1044.67 378.22 L1045.95 378.22 L1046.01 518.02 L1047.29 518.02 L1047.35 513.36 L1048.63 513.36 L1048.69 508.7 L1049.97 508.7 L1050.03 504.04 L1051.31 504.04 L1051.37 499.38 L1052.65 499.38 L1052.71 494.72 L1053.99 494.72 L1054.05 490.06 L1055.33 490.06 L1055.39 485.4 L1056.67 485.4 L1056.73 480.74 L1058.01 480.74 L1058.07 476.08 L1059.35 476.08 L1059.41 471.42 L1060.69 471.42 L1060.75 466.76 L1062.03 466.76 L1062.09 462.1 L1063.37 462.1 L1063.43 457.44 L1064.71 457.44 L1064.77 452.78 L1066.05 452.78 L1066.11 448.12 L1067.39 448.12 L1067.45 443.46 L1068.73 443.46 L1068.79 438.8 L1070.07 438.8 L1070.13 434.14 L1071.41 434.14 L1071.47 429.48 L1072.75 429.48 L1072.81 424.82 L1074.09 424.82 L1074.15 420.16 L1075.43 420.16 L1075.49 415.5 L1076.77 415.5 L1076.83 410.84 L1078.11 410.84 L1078.17 406.18 L1079.45 406.18 L1079.51 401.52 L1080.79 401.52 L1080.85 396.86 L1082.13 396.86 L1082.19 392.2 L1083.47 392.2 L1083.53 387.54 L1084.81 387.54 L1084.87 382.88 L1086.15 382.88 L1086.21 518.02 L1087.49 518.02 L1087.55 513.36 L1088.83 513.36 L1088.89 508.7 L1090.17 508.7 L1090.23 504.04 L1091.51 504.04 L1091.57 499.38 L1092.85 499.38 L1092.91 494.72 L1094.19 494.72 L1094.25 490.06 L1095.53 490.06 L1095.59 485.4 L1096.87 485.4 L1096.93 480.74 L1098.21 480.74 L1098.27 476.08 L1099.55 476.08 L1099.61 471.42 L1100.89 471.42 L1100.95 466.76 L1102.23 466.76 L1102.29 462.1 L1103.57 462.1 L1103.63 457.44 L1104.91 457.44 L1104.97 452.78 L1106.25 452.78 L1106.31 448.12 L1107.59 448.12 L1107.65 443.46 L1108.93 443.46 L1108.99 438.8 L1110.27 438.8 L1110.33 434.14 L1111.61 434.14 L1111.67 429.48 L1112.95 429.48 L1113.01 424.82 L1114.29 424.82 L1114.35 420.16 L1115.63 420.16 L1115.69 415.5 L1116.97 415.5 L1117.03 410.84 L1118.31 410.84 L1118.37 406.18 L1119.65 406.18 L1119.71 401.52 L1120.99 401.52 L1121.05 396.86 L1122.33 396.86 L1122.39 392.2 L1123.67 392.2 L1123.73 387.54 L1125.01 387.54 L1125.07 382.88 L1126.35 382.88 L1126.41 378.22 L1127.69 378.22 L1127.75 518.02 L1129.03 518.02 L1129.09 513.36 L1130.37 513.36 L1130.43 508.7 L1131.71 508.7 L1131.77 504.04 L1133.05 504.04 L1133.11 499.38 L1134.39 499.38 L1134.45 494.72 L1135.73 494.72 L1135.79 490.06 L1137.07 490.06 L1137.13 485.4 L1138.41 485.4 L1138.47 480.74 L1139.75 480.74 L1139.81 476.08 L1141.09 476.08 L1141.15 471.42 L1142.43 471.42 L1142.49 466.76 L1143.77 466.76 L1143.83 462.1 L1145.11 462.1 L1145.17 457.44 L1146.45 457.44 L1146.51 452.78 L1147.79 452.78 L1147.85 448.12 L1149.13 448.12 L1149.19 443.46 L1150.47 443.46 L1150.53 438.8 L1151.81 438.8 L1151.87 434.14 L1153.15 434.14 L1153.21 429.48 L1154.49 429.48 L1154.55 424.82 L1155.83 424.82 L1155.89 420.16 L1157.17 420.16 L1157.23 415.5 L1158.51 415.5 L1158.57 410.84 L1159.85 410.84 L1159.91 406.18 L1161.19 406.18 L1161.25 401.52 L1162.53 401.52 L1162.59 396.86 L1163.87 396.86 L1163.93 392.2 L1165.21 392.2 L1165.27 387.54 L1166.55 387.54 L1166.61 382.88 L1167.89 382.88 L1167.95 518.02 L1169.23 518.02 L1169.29 513.36 L1170.57 513.36 L1170.63 508.7 L1171.91 508.7 L1171.97 504.04 L1173.25 504.04 L1173.31 499.38 L1174.59 499.38 L1174.65 494.72 L1175.93 494.72 L1175.99 490.06 L1177.27 490.06 L1177.33 485.4 L1178.61 485.4 L1178.67 480.74 L1179.95 480.74 L1180.01 476.08 L1181.29 476.08 L1181.35 471.42 L1182.63 471.42 L1182.69 466.76 L1183.97 466.76 L1184.03 462.1 L1185.31 462.1 L1185.37 457.44 L1186.65 457.44 L1186.71 452.78 L1187.99 452.78 L1188.05 448.12 L1189.33 448.12 L1189.39 443.46 L1190.67 443.46 L1190.73 438.8 L1192.01 438.8 L1192.07 434.14 L1193.35 434.14 L1193.41 429.48 L1194.69 429.48 L1194.75 424.82 L1196.03 424.82 L1196.09 420.16 L1197.37 420.16 L1197.43 415.5 L1198.71 415.5 L1198.77 410.84 L1200.05 410.84 L1200.11 406.18 L1201.39 406.18 L1201.45 401.52 L1202.73 401.52 L1202.79 396.86 L1204.07 396.86 L1204.13 392.2 L1205.41 392.2 L1205.47 387.54 L1206.75 387.54 L1206.81 382.88 L1208.09 382.88 L1208.15 378.22 L1209.43 378.22 L1209.49 518.02 L1210.77 518.02 L1210.83 513.36 L1212.11 513.36 L1212.17 508.7 L1213.45 508.7 L1213.51 504.04 L1214.79 504.04 L1214.85 499.38 L1216.13 499.38 L1216.19 494.72 L1217.47 494.72 L1217.53 490.06 L1218.81 490.06 L1218.87 485.4 L1220.15 485.4 L1220.21 480.74 L1221.49 480.74 L1221.55 476.08 L1222.83 476.08 L1222.89 471.42 L1224.17 471.42 L1224.23 466.76 L1225.51 466.76 L1225.57 462.1 L1226.85 462.1 L1226.91 457.44 L1228.19 457.44 L1228.25 452.78 L1229.53 452.78 L1229.59 448.12 L1230.87 448.12 L1230.93 443.46 L1232.21 443.46 L1232.27 438.8 L1233.55 438.8 L1233.61 434.14 L1234.89 434.14 L1234.95 429.48 L1236.23 429.48 L1236.29 424.82 L1237.57 424.82 L1237.63 420.16 L1238.91 420.16 L1238.97 415.5 L1240.25 415.5 L1240.31 410.84 L1241.59 410.84 L1241.65 406.18 L1242.93 406.18 L1242.99 401.52 L1244.27 401.52 L1244.33 396.86 L1245.61 396.86 L1245.67 392.2 L1246.95 392.2 L1247.01 387.54 L1248.29 387.54 L1248.35 382.88 L1249.63 382.88 L1249.69 378.22 L1250.97 378.22 L1251.03 518.02 L1252.31 518.02 L1252.37 513.36 L1253.65 513.36 L1253.71 508.7 L1254.99 508.7 L1255.05 504.04 L1256.33 504.04 L1256.39 499.38 L1257.67 499.38 L1257.73 494.72 L1259.01 494.72 L1259.07 490.06 L1260.35 490.06 L1260.41 485.4 L1261.69 485.4 L1261.75 480.74 L1263.03 480.74 L1263.09 476.08 L1264.37 476.08 L1264.43 471.42 L1265.71 471.42 L1265.77 466.76 L1267.05 466.76 L1267.11 462.1 L1268.39 462.1 L1268.45 457.44 L1269.73 457.44 L1269.79 452.78 L1271.07 452.78 L1271.13 448.12 L1272.41 448.12 L1272.47 443.46 L1273.75 443.46 L1273.81 438.8 L1275.09 438.8 L1275.15 434.14 L1276.43 434.14 L1276.49 429.48 L1277.77 429.48 L1277.83 424.82 L1279.11 424.82 L1279.17 420.16 L1280.45 420.16 L1280.51 415.5 L1281.79 415.5 L1281.85 410.84 L1283.13 410.84 L1283.19 406.18 L1284.47 406.18 L1284.53 401.52 L1285.81 401.52 L1285.87 396.86 L1287.15 396.86 L1287.21 392.2 L1288.49 392.2 L1288.55 518.02 L1289.83 518.02 L1289.89 513.36 L1291.17 513.36 L1291.23 508.7 L1292.51 508.7 L1292.57 504.04 L1293.85 504.04 L1293.91 499.38 L1295.19 499.38 L1295.25 494.72 L1296.53 494.72 L1296.59 490.06 L1297.87 490.06 L1297.93 485.4 L1299.21 485.4 L1299.27 480.74 L1300.55 480.74 L1300.61 476.08 L1301.89 476.08 L1301.95 471.42 L1303.23 471.42 L1303.29 466.76 L1304.57 466.76 L1304.63 462.1 L1305.91 462.1 L1305.97 457.44 L1307.25 457.44 L1307.31 452.78 L1308.59 452.78 L1308.65 448.12 L1309.93 448.12 L1309.99 443.46 L1311.27 443.46 L1311.33 438.8 L1312.61 438.8 L1312.67 434.14 L1313.95 434.14 L1314.01 429.48 L1315.29 429.48 L1315.35 424.82 L1316.63 424.82 L1316.69 420.16 L1317.97 420.16 L1318.03 415.5 L1319.31 415.5 L1319.37 410.84 L1320.65 410.84 L1320.71 406.18 L1321.99 406.18 L1322.05 401.52 L1323.33 401.52 L1323.39 396.86 L1324.67 396.86 L1324.73 392.2 L1326.01 392.2 L1326.07 387.54 L1327.35 387.54 L1327.41 382.88 L1328.69 382.88 L1328.75 378.22 L1330.03 378.22 L1330.09 518.02 L1331.37 518.02 L1331.43 513.36 L1332.71 513.36 L1332.77 508.7 L1334.05 508.7 L1334.11 504.04 L1335.39 504.04 L1335.45 499.38 L1336.73 499.38 L1336.79 494.72 L1338.07 494.72 L1338.13 490.06 L1339.41 490.06 L1339.47 485.4 L1340.75 485.4 L1340.81 480.74 L1342.09 480.74 L1342.15 476.08 L1343.43 476.08 L1343.49 471.42 L1344.77 471.42 L1344.83 466.76 L1346.11 466.76 L1346.17 462.1 L1347.45 462.1 L1347.51 457.44 L1348.79 457.44 L1348.85 452.78 L1350.13 452.78 L1350.19 448.12 L1351.47 448.12 L1351.53 443.46 L1352.81 443.46 L1352.87 438.8 L1354.15 438.8 L1354.21 434.14 L1355.49 434.14 L1355.55 429.48 L1356.83 429.48 L1356.89 424.82 L1358.17 424.82 L1358.23 420.16 L1359.51 420.16 L1359.57 415.5 L1360.85 415.5 L1360.91 410.84 L1362.19 410.84 L1362.25 406.18 L1363.53 406.18 L1363.59 401.52 L1364.87 401.52 L1364.93 396.86 L1366.21 396.86 L1366.27 392.2 L1367.55 392.2 L1367.61 387.54 L1368.89 387.54 L1368.95 382.88 L1370.23 382.88 L1370.29 518.02 L1371.57 518.02 L1371.63 513.36 L1372.91 513.36 L1372.97 508.7 L1374.25 508.7 L1374.31 504.04 L1375.59 504.04 L1375.65 499.38 L1376.93 499.38 L1376.99 494.72 L1378.27 494.72 L1378.33 490.06 L1379.61 490.06 L1379.67 485.4 L1380.95 485.4 L1381.01 480.74 L1382.29 480.74 L1382.35 476.08 L1383.63 476.08 L1383.69 471.42 L1384.97 471.42 L1385.03 466.76 L1386.31 466.76 L1386.37 462.1 L1387.65 462.1 L1387.71 457.44 L1388.99 457.44 L1389.05 452.78 L1390.33 452.78 L1390.39 448.12 L1391.67 448.12 L1391.73 443.46 L1393.01 443.46 L1393.07 438.8 L1394.35 438.8 L1394.41 434.14 L1395.69 434.14 L1395.75 429.48 L1397.03 429.48 L1397.09 424.82 L1398.37 424.82 L1398.43 420.16 L1399.71 420.16 L1399.77 415.5 L1401.05 415.5 L1401.11 410.84 L1402.39 410.84 L1402.45 406.18 L1403.73 406.18 L1403.79 401.52 L1405.07 401.52"/>
<path clip-path="url(#c3)" d="M229.94 828.76 L231.22 828.76 L231.28 805.46 L232.56 805.46 L232.62 782.16 L233.9 782.16 L233.96 758.86 L235.24 758.86 L235.3 735.56 L236.58 735.56 L236.64 712.26 L237.92 712.26 L237.98 688.96 L239.26 688.96 L239.32 828.76 L240.6 828.76 L240.66 805.46 L241.94 805.46 L242 782.16 L243.28 782.16 L243.34 758.86 L244.62 758.86 L244.68 735.56 L245.96 735.56 L246.02 712.26 L247.3 712.26 L247.36 688.96 L248.64 688.96 L248.7 828.76 L249.98 828.76 L250.04 805.46 L251.32 805.46 L251.38 782.16 L252.66 782.16 L252.72 758.86 L254 758.86 L254.06 735.56 L255.34 735.56 L255.4 712.26 L256.68 712.26 L256.74 688.96 L258.02 688.96 L258.08 828.76 L259.36 828.76 L259.42 805.46 L260.7 805.46 L260.76 782.16 L262.04 782.16 L262.1 758.86 L263.38 758.86 L263.44 735.56 L264.72 735.56 L264.78 712.26 L266.06 712.26 L266.12 688.96 L267.4 688.96 L267.46 828.76 L268.74 828.76 L268.8 805.46 L270.08 805.46 L270.14 782.16 L271.42 782.16 L271.48 758.86 L272.76 758.86 L272.82 735.56 L274.1 735.56 L274.16 712.26 L275.44 712.26 L275.5 688.96 L276.78 688.96 L276.84 828.76 L278.12 828.76 L278.18 805.46 L279.46 805.46 L279.52 782.16 L280.8 782.16 L280.86 758.86 L282.14 758.86 L282.2 735.56 L283.48 735.56 L283.54 712.26 L284.82 712.26 L284.88 688.96 L286.16 688.96 L286.22 828.76 L287.5 828.76 L287.56 805.46 L288.84 805.46 L288.9 782.16 L290.18 782.16 L290.24 758.86 L291.52 758.86 L291.58 735.56 L292.86 735.56 L292.92 712.26 L294.2 712.26 L294.26 688.96 L295.54 688.96 L295.6 828.76 L296.88 828.76 L296.94 805.46 L298.22 805.46 L298.28 782.16 L299.56 782.16 L299.62 758.86 L300.9 758.86 L300.96 735.56 L302.24 735.56 L302.3 712.26 L303.58 712.26 L303.64 688.96 L304.92 688.96 L304.98 828.76 L306.26 828.76 L306.32 805.46 L307.6 805.46 L307.66 782.16 L308.94 782.16 L309 758.86 L310.28 758.86 L310.34 735.56 L311.62 735.56 L311.68 712.26 L312.96 712.26 L313.02 688.96 L314.3 688.96 L314.36 828.76 L315.64 828.76 L315.7 805.46 L316.98 805.46 L317.04 782.16 L318.32 782.16 L318.38 758.86 L319.66 758.86 L319.72 735.56 L321 735.56 L321.06 712.26 L322.34 712.26 L322.4 688.96 L323.68 688.96 L323.74 828.76 L325.02 828.76 L325.08 805.46 L326.36 805.46 L326.42 782.16 L327.7 782.16 L327.76 758.86 L329.04 758.86 L329.1 735.56 L330.38 735.56 L330.44 712.26 L331.72 712.26 L331.78 688.96 L333.06 688.96 L333.12 828.76 L334.4 828.76 L334.46 805.46 L335.74 805.46 L335.8 782.16 L337.08 782.16 L337.14 758.86 L338.42 758.86 L338.48 735.56 L339.76 735.56 L339.82 712.26 L341.1 712.26 L341.16 688.96 L342.44 688.96 L342.5 828.76 L343.78 828.76 L343.84 805.46 L345.12 805.46 L345.18 782.16 L346.46 782.16 L346.52 758.86 L347.8 758.86 L347.86 735.56 L349.14 735.56 L349.2 712.26 L350.48 712.26 L350.54 688.96 L351.82 688.96 L351.88 828.76 L353.16 828.76 L353.22 805.46 L354.5 805.46 L354.56 782.16 L355.84 782.16 L355.9 758.86 L357.18 758.86 L357.24 735.56 L358.52 735.56 L358.58 712.26 L359.86 712.26 L359.92 688.96 L361.2 688.96 L361.26 828.76 L362.54 828.76 L362.6 805.46 L363.88 805.46 L363.94 782.16 L365.22 782.16 L365.28 758.86 L366.56 758.86 L366.62 735.56 L367.9 735.56 L367.96 712.26 L369.24 712.26 L369.3 688.96 L370.58 688.96 L370.64 828.76 L371.92 828.76 L371.98 805.46 L373.26 805.46 L373.32 782.16 L374.6 782.16 L374.66 758.86 L375.94 758.86 L376 735.56 L377.28 735.56 L377.34 712.26 L378.62 712.26 L378.68 688.96 L379.96 688.96 L380.02 828.76 L381.3 828.76 L381.36 805.46 L382.64 805.46 L382.7 782.16 L383.98 782.16 L384.04 758.86 L385.32 758.86 L385.38 735.56 L386.66 735.56 L386.72 712.26 L388 712.26 L388.06 688.96 L389.34 688.96 L389.4 828.76 L390.68 828.76 L390.74 805.46 L392.02 805.46 L392.08 782.16 L393.36 782.16 L393.42 758.86 L394.7 758.86 L394.76 735.56 L396.04 735.56 L396.1 712.26 L397.38 712.26 L397.44 688.96 L398.72 688.96 L398.78 828.76 L400.06 828.76 L400.12 805.46 L401.4 805.46 L401.46 782.16 L402.74 782.16 L402.8 758.86 L404.08 758.86 L404.14 735.56 L405.42 735.56 L405.48 712.26 L406.76 712.26 L406.82 688.96 L408.1 688.96 L408.16 828.76 L409.44 828.76 L409.5 805.46 L410.78 805.46 L410.84 782.16 L412.12 782.16 L412.18 758.86 L413.46 758.86 L413.52 735.56 L414.8 735.56 L414.86 712.26 L416.14 712.26 L416.2 688.96 L417.48 688.96 L417.54 828.76 L418.82 828.76 L418.88 805.46 L420.16 805.46 L420.22 782.16 L421.5 782.16 L421.56 758.86 L422.84 758.86 L422.9 735.56 L424.18 735.56 L424.24 712.26 L425.52 712.26 L425.58 688.96 L426.86 688.96 L426.92 828.76 L428.2 828.76 L428.26 805.46 L429.54 805.46 L429.6 782.16 L430.88 782.16 L430.94 758.86 L432.22 758.86 L432.28 735.56 L433.56 735.56 L433.62 712.26 L434.9 712.26 L434.96 688.96 L436.24 688.96 L436.3 828.76 L437.58 828.76 L437.64 805.46 L438.92 805.46 L438.98 782.16 L440.26 782.16 L440.32 758.86 L441.6 758.86 L441.66 735.56 L442.94 735.56 L443 712.26 L444.28 712.26 L444.34 688.96 L445.62 688.96 L445.68 828.76 L446.96 828.76 L447.02 805.46 L448.3 805.46 L448.36 782.16 L449.64 782.16 L449.7 758.86 L450.98 758.86 L451.04 735.56 L452.32 735.56 L452.38 712.26 L453.66 712.26 L453.72 688.96 L455 688.96 L455.06 828.76 L456.34 828.76 L456.4 805.46 L457.68 805.46 L457.74 782.16 L459.02 782.16 L459.08 758.86 L460.36 758.86 L460.42 735.56 L461.7 735.56 L461.76 712.26 L463.04 712.26 L463.1 688.96 L464.38 688.96 L464.44 828.76 L465.72 828.76 L465.78 805.46 L467.06 805.46 L467.12 782.16 L468.4 782.16 L468.46 758.86 L469.74 758.86 L469.8 735.56 L471.08 735.56 L471.14 712.26 L472.42 712.26 L472.48 688.96 L473.76 688.96 L473.82 828.76 L475.1 828.76 L475.16 805.46 L476.44 805.46 L476.5 782.16 L477.78 782.16 L477.84 758.86 L479.12 758.86 L479.18 735.56 L480.46 735.56 L480.52 712.26 L481.8 712.26 L481.86 688.96 L483.14 688.96 L483.2 828.76 L484.48 828.76 L484.54 805.46 L485.82 805.46 L485.88 782.16 L487.16 782.16 L487.22 758.86 L488.5 758.86 L488.56 735.56 L489.84 735.56 L489.9 712.26 L491.18 712.26 L491.24 688.96 L492.52 688.96 L492.58 828.76 L493.86 828.76 L493.92 805.46 L495.2 805.46 L495.26 782.16 L496.54 782.16 L496.6 758.86 L497.88 758.86 L497.94 735.56 L499.22 735.56 L499.28 712.26 L500.56 712.26 L500.62 688.96 L501.9 688.96 L501.96 828.76 L503.24 828.76 L503.3 805.46 L504.58 805.46 L504.64 782.16 L505.92 782.16 L505.98 758.86 L507.26 758.86 L507.32 735.56 L508.6 735.56 L508.66 712.26 L509.94 712.26 L510 688.96 L511.28 688.96 L511.34 828.76 L512.62 828.76 L512.68 805.46 L513.96 805.46 L514.02 782.16 L515.3 782.16 L515.36 758.86 L516.64 758.86 L516.7 735.56 L517.98 735.56 L518.04 712.26 L519.32 712.26 L519.38 688.96 L520.66 688.96 L520.72 828.76 L522 828.76 L522.06 805.46 L523.34 805.46 L523.4 782.16 L524.68 782.16 L524.74 758.86 L526.02 758.86 L526.08 735.56 L527.36 735.56 L527.42 712.26 L528.7 712.26 L528.76 688.96 L530.04 688.96 L530.1 828.76 L531.38 828.76 L531.44 805.46 L532.72 805.46 L532.78 782.16 L534.06 782.16 L534.12 758.86 L535.4 758.86 L535.46 735.56 L536.74 735.56 L536.8 712.26 L538.08 712.26 L538.14 688.96 L539.42 688.96 L539.48 828.76 L540.76 828.76 L540.82 805.46 L542.1 805.46 L542.16 782.16 L543.44 782.16 L543.5 758.86 L544.78 758.86 L544.84 735.56 L546.12 735.56 L546.18 712.26 L547.46 712.26 L547.52 688.96 L548.8 688.96 L548.86 828.76 L550.14 828.76 L550.2 805.46 L551.48 805.46 L551.54 782.16 L552.82 782.16 L552.88 758.86 L554.16 758.86 L554.22 735.56 L555.5 735.56 L555.56 712.26 L556.84 712.26 L556.9 688.96 L558.18 688.96 L558.24 828.76 L559.52 828.76 L559.58 805.46 L560.86 805.46 L560.92 782.16 L562.2 782.16 L562.26 758.86 L563.54 758.86 L563.6 735.56 L564.88 735.56 L564.94 712.26 L566.22 712.26 L566.28 688.96 L567.56 688.96 L567.62 828.76 L568.9 828.76 L568.96 805.46 L570.24 805.46 L570.3 782.16 L571.58 782.16 L571.64 758.86 L572.92 758.86 L572.98 735.56 L574.26 735.56 L574.32 712.26 L575.6 712.26 L575.66 688.96 L576.94 688.96 L577 828.76 L578.28 828.76 L578.34 805.46 L579.62 805.46 L579.68 782.16 L580.96 782.16 L581.02 758.86 L582.3 758.86 L582.36 735.56 L583.64 735.56 L583.7 712.26 L584.98 712.26 L585.04 688.96 L586.32 688.96 L586.38 828.76 L587.66 828.76 L587.72 805.46 L589 805.46 L589.06 782.16 L590.34 782.16 L590.4 758.86 L591.68 758.86 L591.74 735.56 L593.02 735.56 L593.08 712.26 L594.36 712.26 L594.42 688.96 L595.7 688.96 L595.76 828.76 L597.04 828.76 L597.1 805.46 L598.38 805.46 L598.44 782.16 L599.72 782.16 L599.78 758.86 L601.06 758.86 L601.12 735.56 L602.4 735.56 L602.46 712.26 L603.74 712.26 L603.8 688.96 L605.08 688.96 L605.14 828.76 L606.42 828.76 L606.48 805.46 L607.76 805.46 L607.82 782.16 L609.1 782.16 L609.16 758.86 L610.44 758.86 L610.5 735.56 L611.78 735.56 L611.84 712.26 L613.12 712.26 L613.18 688.96 L614.46 688.96 L614.52 828.76 L615.8 828.76 L615.86 805.46 L617.14 805.46 L617.2 782.16 L618.48 782.16 L618.54 758.86 L619.82 758.86 L619.88 735.56 L621.16 735.56 L621.22 712.26 L622.5 712.26 L622.56 688.96 L623.84 688.96 L623.9 828.76 L625.18 828.76 L625.24 805.46 L626.52 805.46 L626.58 782.16 L627.86 782.16 L627.92 758.86 L629.2 758.86 L629.26 735.56 L630.54 735.56 L630.6 712.26 L631.88 712.26 L631.94 688.96 L633.22 688.96 L633.28 828.76 L634.56 828.76 L634.62 805.46 L635.9 805.46 L635.96 782.16 L637.24 782.16 L637.3 758.86 L638.58 758.86 L638.64 735.56 L639.92 735.56 L639.98 712.26 L641.26 712.26 L641.32 688.96 L642.6 688.96 L642.66 828.76 L643.94 828.76 L644 805.46 L645.28 805.46 L645.34 782.16 L646.62 782.16 L646.68 758.86 L647.96 758.86 L648.02 735.56 L649.31 735.56 L649.36 712.26 L650.65 712.26 L650.7 688.96 L651.99 688.96 L652.04 828.76 L653.33 828.76 L653.38 805.46 L654.67 805.46 L654.72 782.16 L656.01 782.16 L656.06 758.86 L657.35 758.86 L657.4 735.56 L658.69 735.56 L658.74 712.26 L660.03 712.26 L660.08 688.96 L661.37 688.96 L661.42 828.76 L662.71 828.76 L662.76 805.46 L664.05 805.46 L664.1 782.16 L665.39 782.16 L665.44 758.86 L666.73 758.86 L666.78 735.56 L668.07 735.56 L668.12 712.26 L669.41 712.26 L669.46 688.96 L670.75 688.96 L670.8 828.76 L672.09 828.76 L672.14 805.46 L673.43 805.46 L673.48 782.16 L674.77 782.16 L674.82 758.86 L676.11 758.86 L676.16 735.56 L677.45 735.56 L677.5 712.26 L678.79 712.26 L678.84 688.96 L680.13 688.96 L680.18 828.76 L681.47 828.76 L681.52 805.46 L682.81 805.46 L682.86 782.16 L684.15 782.16 L684.2 758.86 L685.49 758.86 L685.54 735.56 L686.83 735.56 L686.88 712.26 L688.17 712.26 L688.22 688.96 L689.51 688.96 L689.56 828.76 L690.85 828.76 L690.9 805.46 L692.19 805.46 L692.24 782.16 L693.53 782.16 L693.58 758.86 L694.87 758.86 L694.92 735.56 L696.21 735.56 L696.26 712.26 L697.55 712.26 L697.6 688.96 L698.89 688.96 L698.94 828.76 L700.23 828.76 L700.28 805.46 L701.57 805.46 L701.62 782.16 L702.91 782.16 L702.96 758.86 L704.25 758.86 L704.3 735.56 L705.59 735.56 L705.64 712.26 L706.93 712.26 L706.98 688.96 L708.27 688.96 L708.32 828.76 L709.61 828.76 L709.66 805.46 L710.95 805.46 L711 782.16 L712.29 782.16 L712.34 758.86 L713.63 758.86 L713.68 735.56 L714.97 735.56 L715.02 712.26 L716.31 712.26 L716.36 688.96 L717.65 688.96 L717.7 828.76 L718.99 828.76 L719.04 805.46 L720.33 805.46 L720.38 782.16 L721.67 782.16 L721.72 758.86 L723.01 758.86 L723.06 735.56 L724.35 735.56 L724.4 712.26 L725.69 712.26 L725.74 688.96 L727.03 688.96 L727.08 828.76 L728.37 828.76 L728.42 805.46 L729.71 805.46 L729.76 782.16 L731.05 782.16 L731.1 758.86 L732.39 758.86 L732.44 735.56 L733.73 735.56 L733.78 712.26 L735.07 712.26 L735.12 688.96 L736.41 688.96 L736.46 828.76 L737.75 828.76 L737.8 805.46 L739.09 805.46 L739.14 782.16 L740.43 782.16 L740.48 758.86 L741.77 758.86 L741.82 735.56 L743.11 735.56 L743.16 712.26 L744.45 712.26 L744.5 688.96 L745.79 688.96 L745.84 828.76 L747.13 828.76 L747.18 805.46 L748.47 805.46 L748.52 782.16 L749.81 782.16 L749.86 758.86 L751.15 758.86 L751.2 735.56 L752.49 735.56 L752.54 712.26 L753.83 712.26 L753.88 688.96 L755.17 688.96 L755.22 828.76 L756.51 828.76 L756.56 805.46 L757.85 805.46 L757.9 782.16 L759.19 782.16 L759.24 758.86 L760.53 758.86 L760.58 735.56 L761.87 735.56 L761.92 712.26 L763.21 712.26 L763.26 688.96 L764.55 688.96 L764.6 828.76 L765.89 828.76 L765.94 805.46 L767.23 805.46 L767.28 782.16 L768.57 782.16 L768.62 758.86 L769.91 758.86 L769.96 735.56 L771.25 735.56 L771.3 712.26 L772.59 712.26 L772.64 688.96 L773.93 688.96 L773.98 828.76 L775.27 828.76 L775.32 805.46 L776.61 805.46 L776.66 782.16 L777.95 782.16 L778 758.86 L779.29 758.86 L779.34 735.56 L780.63 735.56 L780.68 712.26 L781.97 712.26 L782.02 688.96 L783.31 688.96 L783.36 828.76 L784.65 828.76 L784.7 805.46 L785.99 805.46 L786.04 782.16 L787.33 782.16 L787.38 758.86 L788.67 758.86 L788.72 735.56 L790.01 735.56 L790.06 712.26 L791.35 712.26 L791.4 688.96 L792.69 688.96 L792.74 828.76 L794.03 828.76 L794.08 805.46 L795.37 805.46 L795.42 782.16 L796.71 782.16 L796.76 758.86 L798.05 758.86 L798.1 735.56 L799.39 735.56 L799.44 712.26 L800.73 712.26 L800.78 688.96 L802.07 688.96 L802.12 828.76 L803.41 828.76 L803.46 805.46 L804.75 805.46 L804.8 782.16 L806.09 782.16 L806.14 758.86 L807.43 758.86 L807.48 735.56 L808.77 735.56 L808.82 712.26 L810.11 712.26 L810.16 688.96 L811.45 688.96 L811.5 828.76 L812.79 828.76 L812.84 805.46 L814.13 805.46 L814.18 782.16 L815.47 782.16 L815.52 758.86 L816.81 758.86 L816.86 735.56 L818.15 735.56 L818.2 712.26 L819.49 712.26 L819.54 688.96 L820.83 688.96 L820.88 828.76 L822.17 828.76 L822.22 805.46 L823.51 805.46 L823.56 782.16 L824.85 782.16 L824.9 758.86 L826.19 758.86 L826.24 735.56 L827.53 735.56 L827.58 712.26 L828.87 712.26 L828.92 688.96 L830.21 688.96 L830.26 828.76 L831.55 828.76 L831.6 805.46 L832.89 805.46 L832.94 782.16 L834.23 782.16 L834.28 758.86 L835.57 758.86 L835.62 735.56 L836.91 735.56 L836.96 712.26 L838.25 712.26 L838.3 688.96 L839.59 688.96 L839.64 828.76 L840.93 828.76 L840.98 805.46 L842.27 805.46 L842.32 782.16 L843.61 782.16 L843.66 758.86 L844.95 758.86 L845 735.56 L846.29 735.56 L846.34 712.26 L847.63 712.26 L847.68 688.96 L848.97 688.96 L849.02 828.76 L850.31 828.76 L850.36 805.46 L851.65 805.46 L851.7 782.16 L852.99 782.16 L853.04 758.86 L854.33 758.86 L854.38 735.56 L855.67 735.56 L855.72 712.26 L857.01 712.26 L857.06 688.96 L858.35 688.96 L858.4 828.76 L859.69 828.76 L859.74 805.46 L861.03 805.46 L861.08 782.16 L862.37 782.16 L862.42 758.86 L863.71 758.86 L863.76 735.56 L865.05 735.56 L865.1 712.26 L866.39 712.26 L866.44 688.96 L867.73 688.96 L867.78 828.76 L869.07 828.76 L869.12 805.46 L870.41 805.46 L870.46 782.16 L871.75 782.16 L871.8 758.86 L873.09 758.86 L873.14 735.56 L874.43 735.56 L874.48 712.26 L875.77 712.26 L875.82 688.96 L877.11 688.96 L877.16 828.76 L878.45 828.76 L878.5 805.46 L879.79 805.46 L879.84 782.16 L881.13 782.16 L881.18 758.86 L882.47 758.86 L882.52 735.56 L883.81 735.56 L883.86 712.26 L885.15 712.26 L885.2 688.96 L886.49 688.96 L886.54 828.76 L887.83 828.76 L887.88 805.46 L889.17 805.46 L889.22 782.16 L890.51 782.16 L890.56 758.86 L891.85 758.86 L891.9 735.56 L893.19 735.56 L893.24 712.26 L894.53 712.26 L894.58 688.96 L895.87 688.96 L895.92 828.76 L897.21 828.76 L897.26 805.46 L898.55 805.46 L898.6 782.16 L899.89 782.16 L899.94 758.86 L901.23 758.86 L901.28 735.56 L902.57 735.56 L902.62 712.26 L903.91 712.26 L903.96 688.96 L905.25 688.96 L905.3 828.76 L906.59 828.76 L906.64 805.46 L907.93 805.46 L907.98 782.16 L909.27 782.16 L909.32 758.86 L910.61 758.86 L910.66 735.56 L911.95 735.56 L912 712.26 L913.29 712.26 L913.34 688.96 L914.63 688.96 L914.68 828.76 L915.97 828.76 L916.02 805.46 L917.31 805.46 L917.36 782.16 L918.65 782.16 L918.7 758.86 L919.99 758.86 L920.04 735.56 L921.33 735.56 L921.38 712.26 L922.67 712.26 L922.72 688.96 L924.01 688.96 L924.06 828.76 L925.35 828.76 L925.4 805.46 L926.69 805.46 L926.74 782.16 L928.03 782.16 L928.08 758.86 L929.37 758.86 L929.42 735.56 L930.71 735.56 L930.76 712.26 L932.05 712.26 L932.1 688.96 L933.39 688.96 L933.44 828.76 L934.73 828.76 L934.78 805.46 L936.07 805.46 L936.12 782.16 L937.41 782.16 L937.46 758.86 L938.75 758.86 L938.8 735.56 L940.09 735.56 L940.14 712.26 L941.43 712.26 L941.48 688.96 L942.77 688.96 L942.82 828.76 L944.11 828.76 L944.16 805.46 L945.45 805.46 L945.5 782.16 L946.79 782.16 L946.84 758.86 L948.13 758.86 L948.18 735.56 L949.47 735.56 L949.52 712.26 L950.81 712.26 L950.86 688.96 L952.15 688.96 L952.2 828.76 L953.49 828.76 L953.54 805.46 L954.83 805.46 L954.88 782.16 L956.17 782.16 L956.22 758.86 L957.51 758.86 L957.56 735.56 L958.85 735.56 L958.9 712.26 L960.19 712.26 L960.24 688.96 L961.53 688.96 L961.58 828.76 L962.87 828.76 L962.92 805.46 L964.21 805.46 L964.26 782.16 L965.55 782.16 L965.6 758.86 L966.89 758.86 L966.94 735.56 L968.23 735.56 L968.28 712.26 L969.57 712.26 L969.62 688.96 L970.91 688.96 L970.96 828.76 L972.25 828.76 L972.3 805.46 L973.59 805.46 L973.64 782.16 L974.93 782.16 L974.98 758.86 L976.27 758.86 L976.32 735.56 L977.61 735.56 L977.66 712.26 L978.95 712.26 L979 688.96 L980.29 688.96 L980.34 828.76 L981.63 828.76 L981.68 805.46 L982.97 805.46 L983.02 782.16 L984.31 782.16 L984.36 758.86 L985.65 758.86 L985.7 735.56 L986.99 735.56 L987.04 712.26 L988.33 712.26 L988.38 688.96 L989.67 688.96 L989.72 828.76 L991.01 828.76 L991.06 805.46 L992.35 805.46 L992.4 782.16 L993.69 782.16 L993.74 758.86 L995.03 758.86 L995.08 735.56 L996.37 735.56 L996.42 712.26 L997.71 712.26 L997.77 688.96 L999.05 688.96 L999.11 828.76 L1000.39 828.76 L1000.45 805.46 L1001.73 805.46 L1001.79 782.16 L1003.07 782.16 L1003.13 758.86 L1004.41 758.86 L1004.47 735.56 L1005.75 735.56 L1005.81 712.26 L1007.09 712.26 L1007.15 688.96 L1008.43 688.96 L1008.49 828.76 L1009.77 828.76 L1009.83 805.46 L1011.11 805.46 L1011.17 782.16 L1012.45 782.16 L1012.51 758.86 L1013.79 758.86 L1013.85 735.56 L1015.13 735.56 L1015.19 712.26 L1016.47 712.26 L1016.53 688.96 L1017.81 688.96 L1017.87 828.76 L1019.15 828.76 L1019.21 805.46 L1020.49 805.46 L1020.55 782.16 L1021.83 782.16 L1021.89 758.86 L1023.17 758.86 L1023.23 735.56 L1024.51 735.56 L1024.57 712.26 L1025.85 712.26 L1025.91 688.96 L1027.19 688.96 L1027.25 828.76 L1028.53 828.76 L1028.59 805.46 L1029.87 805.46 L1029.93 782.16 L1031.21 782.16 L1031.27 758.86 L1032.55 758.86 L1032.61 735.56 L1033.89 735.56 L1033.95 712.26 L1035.23 712.26 L1035.29 688.96 L1036.57 688.96 L1036.63 828.76 L1037.91 828.76 L1037.97 805.46 L1039.25 805.46 L1039.31 782.16 L1040.59 782.16 L1040.65 758.86 L1041.93 758.86 L1041.99 735.56 L1043.27 735.56 L1043.33 712.26 L1044.61 712.26 L1044.67 688.96 L1045.95 688.96 L1046.01 828.76 L1047.29 828.76 L1047.35 805.46 L1048.63 805.46 L1048.69 782.16 L1049.97 782.16 L1050.03 758.86 L1051.31 758.86 L1051.37 735.56 L1052.65 735.56 L1052.71 712.26 L1053.99 712.26 L1054.05 688.96 L1055.33 688.96 L1055.39 828.76 L1056.67 828.76 L1056.73 805.46 L1058.01 805.46 L1058.07 782.16 L1059.35 782.16 L1059.41 758.86 L1060.69 758.86 L1060.75 735.56 L1062.03 735.56 L1062.09 712.26 L1063.37 712.26 L1063.43 688.96 L1064.71 688.96 L1064.77 828.76 L1066.05 828.76 L1066.11 805.46 L1067.39 805.46 L1067.45 782.16 L1068.73 782.16 L1068.79 758.86 L1070.07 758.86 L1070.13 735.56 L1071.41 735.56 L1071.47 712.26 L1072.75 712.26 L1072.81 688.96 L1074.09 688.96 L1074.15 828.76 L1075.43 828.76 L1075.49 805.46 L1076.77 805.46 L1076.83 782.16 L1078.11 782.16 L1078.17 758.86 L1079.45 758.86 L1079.51 735.56 L1080.79 735.56 L1080.85 712.26 L1082.13 712.26 L1082.19 688.96 L1083.47 688.96 L1083.53 828.76 L1084.81 828.76 L1084.87 805.46 L1086.15 805.46 L1086.21 782.16 L1087.49 782.16 L1087.55 758.86 L1088.83 758.86 L1088.89 735.56 L1090.17 735.56 L1090.23 712.26 L1091.51 712.26 L1091.57 688.96 L1092.85 688.96 L1092.91 828.76 L1094.19 828.76 L1094.25 805.46 L1095.53 805.46 L1095.59 782.16 L1096.87 782.16 L1096.93 758.86 L1098.21 758.86 L1098.27 735.56 L1099.55 735.56 L1099.61 712.26 L1100.89 712.26 L1100.95 688.96 L1102.23 688.96 L1102.29 828.76 L1103.57 828.76 L1103.63 805.46 L1104.91 805.46 L1104.97 782.16 L1106.25 782.16 L1106.31 758.86 L1107.59 758.86 L1107.65 735.56 L1108.93 735.56 L1108.99 712.26 L1110.27 712.26 L1110.33 688.96 L1111.61 688.96 L1111.67 828.76 L1112.95 828.76 L1113.01 805.46 L1114.29 805.46 L1114.35 782.16 L1115.63 782.16 L1115.69 758.86 L1116.97 758.86 L1117.03 735.56 L1118.31 735.56 L1118.37 712.26 L1119.65 712.26 L1119.71 688.96 L1120.99 688.96 L1121.05 828.76 L1122.33 828.76 L1122.39 805.46 L1123.67 805.46 L1123.73 782.16 L1125.01 782.16 L1125.07 758.86 L1126.35 758.86 L1126.41 735.56 L1127.69 735.56 L1127.75 712.26 L1129.03 712.26 L1129.09 688.96 L1130.37 688.96 L1130.43 828.76 L1131.71 828.76 L1131.77 805.46 L1133.05 805.46 L1133.11 782.16 L1134.39 782.16 L1134.45 758.86 L1135.73 758.86 L1135.79 735.56 L1137.07 735.56 L1137.13 712.26 L1138.41 712.26 L1138.47 688.96 L1139.75 688.96 L1139.81 828.76 L1141.09 828.76 L1141.15 805.46 L1142.43 805.46 L1142.49 782.16 L1143.77 782.16 L1143.83 758.86 L1145.11 758.86 L1145.17 735.56 L1146.45 735.56 L1146.51 712.26 L1147.79 712.26 L1147.85 688.96 L1149.13 688.96 L1149.19 828.76 L1150.47 828.76 L1150.53 805.46 L1151.81 805.46 L1151.87 782.16 L1153.15 782.16 L1153.21 758.86 L1154.49 758.86 L1154.55 735.56 L1155.83 735.56 L1155.89 712.26 L1157.17 712.26 L1157.23 688.96 L1158.51 688.96 L1158.57 828.76 L1159.85 828.76 L1159.91 805.46 L1161.19 805.46 L1161.25 782.16 L1162.53 782.16 L1162.59 758.86 L1163.87 758.86 L1163.93 735.56 L1165.21 735.56 L1165.27 712.26 L1166.55 712.26 L1166.61 688.96 L1167.89 688.96 L1167.95 828.76 L1169.23 828.76 L1169.29 805.46 L1170.57 805.46 L1170.63 782.16 L1171.91 782.16 L1171.97 758.86 L1173.25 758.86 L1173.31 735.56 L1174.59 735.56 L1174.65 712.26 L1175.93 712.26 L1175.99 688.96 L1177.27 688.96 L1177.33 828.76 L1178.61 828.76 L1178.67 805.46 L1179.95 805.46 L1180.01 782.16 L1181.29 782.16 L1181.35 758.86 L1182.63 758.86 L1182.69 735.56 L1183.97 735.56 L1184.03 712.26 L1185.31 712.26 L1185.37 688.96 L1186.65 688.96 L1186.71 828.76 L1187.99 828.76 L1188.05 805.46 L1189.33 805.46 L1189.39 782.16 L1190.67 782.16 L1190.73 758.86 L1192.01 758.86 L1192.07 735.56 L1193.35 735.56 L1193.41 712.26 L1194.69 712.26 L1194.75 688.96 L1196.03 688.96 L1196.09 828.76 L1197.37 828.76 L1197.43 805.46 L1198.71 805.46 L1198.77 782.16 L1200.05 782.16 L1200.11 758.86 L1201.39 758.86 L1201.45 735.56 L1202.73 735.56 L1202.79 712.26 L1204.07 712.26 L1204.13 688.96 L1205.41 688.96 L1205.47 828.76 L1206.75 828.76 L1206.81 805.46 L1208.09 805.46 L1208.15 782.16 L1209.43 782.16 L1209.49 758.86 L1210.77 758.86 L1210.83 735.56 L1212.11 735.56 L1212.17 712.26 L1213.45 712.26 L1213.51 688.96 L1214.79 688.96 L1214.85 828.76 L1216.13 828.76 L1216.19 805.46 L1217.47 805.46 L1217.53 782.16 L1218.81 782.16 L1218.87 758.86 L1220.15 758.86 L1220.21 735.56 L1221.49 735.56 L1221.55 712.26 L1222.83 712.26 L1222.89 688.96 L1224.17 688.96 L1224.23 828.76 L1225.51 828.76 L1225.57 805.46 L1226.85 805.46 L1226.91 782.16 L1228.19 782.16 L1228.25 758.86 L1229.53 758.86 L1229.59 735.56 L1230.87 735.56 L1230.93 712.26 L1232.21 712.26 L1232.27 688.96 L1233.55 688.96 L1233.61 828.76 L1234.89 828.76 L1234.95 805.46 L1236.23 805.46 L1236.29 782.16 L1237.57 782.16 L1237.63 758.86 L1238.91 758.86 L1238.97 735.56 L1240.25 735.56 L1240.31 712.26 L1241.59 712.26 L1241.65 688.96 L1242.93 688.96 L1242.99 828.76 L1244.27 828.76 L1244.33 805.46 L1245.61 805.46 L1245.67 782.16 L1246.95 782.16 L1247.01 758.86 L1248.29 758.86 L1248.35 735.56 L1249.63 735.56 L1249.69 712.26 L1250.97 712.26 L1251.03 688.96 L1252.31 688.96 L1252.37 828.76 L1253.65 828.76 L1253.71 805.46 L1254.99 805.46 L1255.05 782.16 L1256.33 782.16 L1256.39 758.86 L1257.67 758.86 L1257.73 735.56 L1259.01 735.56 L1259.07 712.26 L1260.35 712.26 L1260.41 688.96 L1261.69 688.96 L1261.75 828.76 L1263.03 828.76 L1263.09 805.46 L1264.37 805.46 L1264.43 782.16 L1265.71 782.16 L1265.77 758.86 L1267.05 758.86 L1267.11 735.56 L1268.39 735.56 L1268.45 712.26 L1269.73 712.26 L1269.79 688.96 L1271.07 688.96 L1271.13 828.76 L1272.41 828.76 L1272.47 805.46 L1273.75 805.46 L1273.81 782.16 L1275.09 782.16 L1275.15 758.86 L1276.43 758.86 L1276.49 735.56 L1277.77 735.56 L1277.83 712.26 L1279.11 712.26 L1279.17 688.96 L1280.45 688.96 L1280.51 828.76 L1281.79 828.76 L1281.85 805.46 L1283.13 805.46 L1283.19 782.16 L1284.47 782.16 L1284.53 758.86 L1285.81 758.86 L1285.87 735.56 L1287.15 735.56 L1287.21 712.26 L1288.49 712.26 L1288.55 688.96 L1289.83 688.96 L1289.89 828.76 L1291.17 828.76 L1291.23 805.46 L1292.51 805.46 L1292.57 782.16 L1293.85 782.16 L1293.91 758.86 L1295.19 758.86 L1295.25 735.56 L1296.53 735.56 L1296.59 712.26 L1297.87 712.26 L1297.93 688.96 L1299.21 688.96 L1299.27 828.76 L1300.55 828.76 L1300.61 805.46 L1301.89 805.46 L1301.95 782.16 L1303.23 782.16 L1303.29 758.86 L1304.57 758.86 L1304.63 735.56 L1305.91 735.56 L1305.97 712.26 L1307.25 712.26 L1307.31 688.96 L1308.59 688.96 L1308.65 828.76 L1309.93 828.76 L1309.99 805.46 L1311.27 805.46 L1311.33 782.16 L1312.61 782.16 L1312.67 758.86 L1313.95 758.86 L1314.01 735.56 L1315.29 735.56 L1315.35 712.26 L1316.63 712.26 L1316.69 688.96 L1317.97 688.96 L1318.03 828.76 L1319.31 828.76 L1319.37 805.46 L1320.65 805.46 L1320.71 782.16 L1321.99 782.16 L1322.05 758.86 L1323.33 758.86 L1323.39 735.56 L1324.67 735.56 L1324.73 712.26 L1326.01 712.26 L1326.07 688.96 L1327.35 688.96 L1327.41 828.76 L1328.69 828.76 L1328.75 805.46 L1330.03 805.46 L1330.09 782.16 L1331.37 782.16 L1331.43 758.86 L1332.71 758.86 L1332.77 735.56 L1334.05 735.56 L1334.11 712.26 L1335.39 712.26 L1335.45 688.96 L1336.73 688.96 L1336.79 828.76 L1338.07 828.76 L1338.13 805.46 L1339.41 805.46 L1339.47 782.16 L1340.75 782.16 L1340.81 758.86 L1342.09 758.86 L1342.15 735.56 L1343.43 735.56 L1343.49 712.26 L1344.77 712.26 L1344.83 688.96 L1346.11 688.96 L1346.17 828.76 L1347.45 828.76 L1347.51 805.46 L1348.79 805.46 L1348.85 782.16 L1350.13 782.16 L1350.19 758.86 L1351.47 758.86 L1351.53 735.56 L1352.81 735.56 L1352.87 712.26 L1354.15 712.26 L1354.21 688.96 L1355.49 688.96 L1355.55 828.76 L1356.83 828.76 L1356.89 805.46 L1358.17 805.46 L1358.23 782.16 L1359.51 782.16 L1359.57 758.86 L1360.85 758.86 L1360.91 735.56 L1362.19 735.56 L1362.25 712.26 L1363.53 712.26 L1363.59 688.96 L1364.87 688.96 L1364.93 828.76 L1366.21 828.76 L1366.27 805.46 L1367.55 805.46 L1367.61 782.16 L1368.89 782.16 L1368.95 758.86 L1370.23 758.86 L1370.29 735.56 L1371.57 735.56 L1371.63 712.26 L1372.91 712.26 L1372.97 688.96 L1374.25 688.96 L1374.31 828.76 L1375.59 828.76 L1375.65 805.46 L1376.93 805.46 L1376.99 782.16 L1378.27 782.16 L1378.33 758.86 L1379.61 758.86 L1379.67 735.56 L1380.95 735.56 L1381.01 712.26 L1382.29 712.26 L1382.35 688.96 L1383.63 688.96 L1383.69 828.76 L1384.97 828.76 L1385.03 805.46 L1386.31 805.46 L1386.37 782.16 L1387.65 782.16 L1387.71 758.86 L1388.99 758.86 L1389.05 735.56 L1390.33 735.56 L1390.39 712.26 L1391.67 712.26 L1391.73 688.96 L1393.01 688.96 L1393.07 828.76 L1394.35 828.76 L1394.41 805.46 L1395.69 805.46 L1395.75 782.16 L1397.03 782.16 L1397.09 758.86 L1398.37 758.86 L1398.43 735.56 L1399.71 735.56 L1399.77 712.26 L1401.05 712.26 L1401.11 688.96 L1402.39 688.96 L1402.45 828.76 L1403.73 828.76 L1403.79 805.46 L1405.07 805.46"/>
<path clip-path="url(#c4)" d="M229.94 984.13 L231.22 984.13 L231.28 983.75 L232.56 983.75 L232.62 983.36 L233.9 983.36 L233.96 982.98 L235.24 982.98 L235.3 982.6 L236.58 982.6 L236.64 982.21 L237.92 982.21 L237.98 981.83 L239.26 981.83 L239.32 981.45 L240.6 981.45 L240.66 981.07 L241.94 981.07 L242 980.68 L243.28 980.68 L243.34 980.3 L244.62 980.3 L244.68 979.92 L245.96 979.92 L246.02 979.53 L247.3 979.53 L247.36 979.15 L248.64 979.15 L248.7 978.77 L249.98 978.77 L250.04 978.38 L251.32 978.38 L251.38 978 L252.66 978 L252.72 977.62 L254 977.62 L254.06 977.24 L255.34 977.24 L255.4 976.85 L256.68 976.85 L256.74 976.47 L258.02 976.47 L258.08 976.09 L259.36 976.09 L259.42 975.7 L260.7 975.7 L260.76 975.32 L262.04 975.32 L262.1 974.94 L263.38 974.94 L263.44 974.55 L264.72 974.55 L264.78 974.17 L266.06 974.17 L266.12 973.79 L267.4 973.79 L267.46 973.41 L268.74 973.41 L268.8 973.02 L270.08 973.02 L270.14 972.64 L271.42 972.64 L271.48 972.26 L272.76 972.26 L272.82 971.87 L274.1 971.87 L274.16 971.49 L275.44 971.49 L275.5 971.11 L276.78 971.11 L276.84 970.72 L278.12 970.72 L278.18 970.34 L279.46 970.34 L279.52 969.96 L280.8 969.96 L280.86 969.58 L282.14 969.58 L282.2 969.19 L283.48 969.19 L283.54 968.81 L284.82 968.81 L284.88 968.43 L286.16 968.43 L286.22 968.04 L287.5 968.04 L287.56 967.66 L288.84 967.66 L288.9 967.28 L290.18 967.28 L290.24 966.89 L291.52 966.89 L291.58 966.51 L292.86 966.51 L292.92 966.13 L294.2 966.13 L294.26 965.75 L295.54 965.75 L295.6 965.36 L296.88 965.36 L296.94 964.98 L298.22 964.98 L298.28 964.6 L299.56 964.6 L299.62 964.21 L300.9 964.21 L300.96 963.83 L302.24 963.83 L302.3 963.45 L303.58 963.45 L303.64 963.06 L304.92 963.06 L304.98 962.68 L306.26 962.68 L306.32 962.3 L307.6 962.3 L307.66 961.92 L308.94 961.92 L309 961.53 L310.28 961.53 L310.34 961.15 L311.62 961.15 L311.68 960.77 L312.96 960.77 L313.02 960.38 L314.3 960.38 L314.36 960 L315.64 960 L315.7 959.62 L316.98 959.62 L317.04 959.23 L318.32 959.23 L318.38 958.85 L319.66 958.85 L319.72 958.47 L321 958.47 L321.06 958.09 L322.34 958.09 L322.4 957.7 L323.68 957.7 L323.74 957.32 L325.02 957.32 L325.08 956.94 L326.36 956.94 L326.42 956.55 L327.7 956.55 L327.76 956.17 L329.04 956.17 L329.1 955.79 L330.38 955.79 L330.44 955.4 L331.72 955.4 L331.78 955.02 L333.06 955.02 L333.12 954.64 L334.4 954.64 L334.46 954.25 L335.74 954.25 L335.8 953.87 L337.08 953.87 L337.14 953.49 L338.42 953.49 L338.48 953.11 L339.76 953.11 L339.82 952.72 L341.1 952.72 L341.16 952.34 L342.44 952.34 L342.5 951.96 L343.78 951.96 L343.84 951.57 L345.12 951.57 L345.18 951.19 L346.46 951.19 L346.52 950.81 L347.8 950.81 L347.86 950.42 L349.14 950.42 L349.2 950.04 L350.48 950.04 L350.54 949.66 L351.82 949.66 L351.88 949.28 L353.16 949.28 L353.22 948.89 L354.5 948.89 L354.56 948.51 L355.84 948.51 L355.9 948.13 L357.18 948.13 L357.24 947.74 L358.52 947.74 L358.58 947.36 L359.86 947.36 L359.92 946.98 L361.2 946.98 L361.26 946.59 L362.54 946.59 L362.6 946.21 L363.88 946.21 L363.94 945.83 L365.22 945.83 L365.28 945.45 L366.56 945.45 L366.62 945.06 L367.9 945.06 L367.96 944.68 L369.24 944.68 L369.3 944.3 L370.58 944.3 L370.64 943.91 L371.92 943.91 L371.98 943.53 L373.26 943.53 L373.32 943.15 L374.6 943.15 L374.66 942.76 L375.94 942.76 L376 942.38 L377.28 942.38 L377.34 942 L378.62 942 L378.68 941.62 L379.96 941.62 L380.02 941.23 L381.3 941.23 L381.36 940.85 L382.64 940.85 L382.7 940.47 L383.98 940.47 L384.04 940.08 L385.32 940.08 L385.38 939.7 L386.66 939.7 L386.72 939.32 L388 939.32 L388.06 938.93 L389.34 938.93 L389.4 938.55 L390.68 938.55 L390.74 938.17 L392.02 938.17 L392.08 937.79 L393.36 937.79 L393.42 937.4 L394.7 937.4 L394.76 937.02 L396.04 937.02 L396.1 936.64 L397.38 936.64 L397.44 936.25 L398.72 936.25 L398.78 935.87 L400.06 935.87 L400.12 935.49 L401.4 935.49 L401.46 935.1 L402.74 935.1 L402.8 934.72 L404.08 934.72 L404.14 934.34 L405.42 934.34 L405.48 933.96 L406.76 933.96 L406.82 933.57 L408.1 933.57 L408.16 933.19 L409.44 933.19 L409.5 932.81 L410.78 932.81 L410.84 932.42 L412.12 932.42 L412.18 932.04 L413.46 932.04 L413.52 931.66 L414.8 931.66 L414.86 931.27 L416.14 931.27 L416.2 930.89 L417.48 930.89 L417.54 930.51 L418.82 930.51 L418.88 930.13 L420.16 930.13 L420.22 929.74 L421.5 929.74 L421.56 929.36 L422.84 929.36 L422.9 928.98 L424.18 928.98 L424.24 928.59 L425.52 928.59 L425.58 928.21 L426.86 928.21 L426.92 927.83 L428.2 927.83 L428.26 927.44 L429.54 927.44 L429.6 927.06 L430.88 927.06 L430.94 926.68 L432.22 926.68 L432.28 926.29 L433.56 926.29 L433.62 925.91 L434.9 925.91 L434.96 925.53 L436.24 925.53 L436.3 925.15 L437.58 925.15 L437.64 924.76 L438.92 924.76 L438.98 924.38 L440.26 924.38 L440.32 924 L441.6 924 L441.66 923.61 L442.94 923.61 L443 923.23 L444.28 923.23 L444.34 922.85 L445.62 922.85 L445.68 922.46 L446.96 922.46 L447.02 922.08 L448.3 922.08 L448.36 921.7 L449.64 921.7 L449.7 921.32 L450.98 921.32 L451.04 920.93 L452.32 920.93 L452.38 920.55 L453.66 920.55 L453.72 920.17 L455 920.17 L455.06 919.78 L456.34 919.78 L456.4 919.4 L457.68 919.4 L457.74 919.02 L459.02 919.02 L459.08 918.63 L460.36 918.63 L460.42 918.25 L461.7 918.25 L461.76 917.87 L463.04 917.87 L463.1 917.49 L464.38 917.49 L464.44 917.1 L465.72 917.1 L465.78 916.72 L467.06 916.72 L467.12 916.34 L468.4 916.34 L468.46 915.95 L469.74 915.95 L469.8 915.57 L471.08 915.57 L471.14 915.19 L472.42 915.19 L472.48 914.8 L473.76 914.8 L473.82 914.42 L475.1 914.42 L475.16 914.04 L476.44 914.04 L476.5 913.66 L477.78 913.66 L477.84 913.27 L479.12 913.27 L479.18 912.89 L480.46 912.89 L480.52 912.51 L481.8 912.51 L481.86 912.12 L483.14 912.12 L483.2 911.74 L484.48 911.74 L484.54 911.36 L485.82 911.36 L485.88 910.97 L487.16 910.97 L487.22 910.59 L488.5 910.59 L488.56 910.21 L489.84 910.21 L489.9 909.83 L491.18 909.83 L491.24 909.44 L492.52 909.44 L492.58 909.06 L493.86 909.06 L493.92 908.68 L495.2 908.68 L495.26 908.29 L496.54 908.29 L496.6 907.91 L497.88 907.91 L497.94 907.53 L499.22 907.53 L499.28 907.14 L500.56 907.14 L500.62 906.76 L501.9 906.76 L501.96 906.38 L503.24 906.38 L503.3 906 L504.58 906 L504.64 905.61 L505.92 905.61 L505.98 905.23 L507.26 905.23 L507.32 904.85 L508.6 904.85 L508.66 904.46 L509.94 904.46 L510 904.08 L511.28 904.08 L511.34 903.7 L512.62 903.7 L512.68 903.31 L513.96 903.31 L514.02 902.93 L515.3 902.93 L515.36 902.55 L516.64 902.55 L516.7 902.17 L517.98 902.17 L518.04 901.78 L519.32 901.78 L519.38 901.4 L520.66 901.4 L520.72 901.02 L522 901.02 L522.06 900.63 L523.34 900.63 L523.4 900.25 L524.68 900.25 L524.74 899.87 L526.02 899.87 L526.08 899.48 L527.36 899.48 L527.42 899.1 L528.7 899.1 L528.76 898.72 L530.04 898.72 L530.1 898.33 L531.38 898.33 L531.44 897.95 L532.72 897.95 L532.78 897.57 L534.06 897.57 L534.12 897.19 L535.4 897.19 L535.46 896.8 L536.74 896.8 L536.8 896.42 L538.08 896.42 L538.14 896.04 L539.42 896.04 L539.48 895.65 L540.76 895.65 L540.82 895.27 L542.1 895.27 L542.16 894.89 L543.44 894.89 L543.5 894.5 L544.78 894.5 L544.84 894.12 L546.12 894.12 L546.18 893.74 L547.46 893.74 L547.52 893.36 L548.8 893.36 L548.86 892.97 L550.14 892.97 L550.2 892.59 L551.48 892.59 L551.54 892.21 L552.82 892.21 L552.88 891.82 L554.16 891.82 L554.22 891.44 L555.5 891.44 L555.56 891.06 L556.84 891.06 L556.9 890.67 L558.18 890.67 L558.24 890.29 L559.52 890.29 L559.58 889.91 L560.86 889.91 L560.92 889.53 L562.2 889.53 L562.26 889.14 L563.54 889.14 L563.6 888.76 L564.88 888.76 L564.94 888.38 L566.22 888.38 L566.28 887.99 L567.56 887.99 L567.62 887.61 L568.9 887.61 L568.96 887.23 L570.24 887.23 L570.3 886.84 L571.58 886.84 L571.64 886.46 L572.92 886.46 L572.98 886.08 L574.26 886.08 L574.32 885.7 L575.6 885.7 L575.66 885.31 L576.94 885.31 L577 884.93 L578.28 884.93 L578.34 884.55 L579.62 884.55 L579.68 884.16 L580.96 884.16 L581.02 883.78 L582.3 883.78 L582.36 883.4 L583.64 883.4 L583.7 883.01 L584.98 883.01 L585.04 882.63 L586.32 882.63 L586.38 882.25 L587.66 882.25 L587.72 881.87 L589 881.87 L589.06 881.48 L590.34 881.48 L590.4 881.1 L591.68 881.1 L591.74 880.72 L593.02 880.72 L593.08 880.33 L594.36 880.33 L594.42 879.95 L595.7 879.95 L595.76 879.57 L597.04 879.57 L597.1 879.18 L598.38 879.18 L598.44 878.8 L599.72 878.8 L599.78 878.42 L601.06 878.42 L601.12 878.04 L602.4 878.04 L602.46 877.65 L603.74 877.65 L603.8 877.27 L605.08 877.27 L605.14 876.89 L606.42 876.89 L606.48 876.5 L607.76 876.5 L607.82 876.12 L609.1 876.12 L609.16 875.74 L610.44 875.74 L610.5 875.35 L611.78 875.35 L611.84 874.97 L613.12 874.97 L613.18 874.59 L614.46 874.59 L614.52 874.21 L615.8 874.21 L615.86 873.82 L617.14 873.82 L617.2 873.44 L618.48 873.44 L618.54 873.06 L619.82 873.06 L619.88 872.67 L621.16 872.67 L621.22 872.29 L622.5 872.29 L622.56 871.91 L623.84 871.91 L623.9 871.52 L625.18 871.52 L625.24 871.14 L626.52 871.14 L626.58 870.76 L627.86 870.76 L627.92 870.37 L629.2 870.37 L629.26 869.99 L630.54 869.99 L630.6 869.61 L631.88 869.61 L631.94 869.23 L633.22 869.23 L633.28 868.84 L634.56 868.84 L634.62 868.46 L635.9 868.46 L635.96 868.08 L637.24 868.08 L637.3 867.69 L638.58 867.69 L638.64 867.31 L639.92 867.31 L639.98 866.93 L641.26 866.93 L641.32 866.54 L642.6 866.54 L642.66 866.16 L643.94 866.16 L644 865.78 L645.28 865.78 L645.34 865.4 L646.62 865.4 L646.68 865.01 L647.96 865.01 L648.02 864.63 L649.31 864.63 L649.36 864.25 L650.65 864.25 L650.7 863.86 L651.99 863.86 L652.04 863.48 L653.33 863.48 L653.38 863.1 L654.67 863.1 L654.72 862.71 L656.01 862.71 L656.06 862.33 L657.35 862.33 L657.4 861.95 L658.69 861.95 L658.74 861.57 L660.03 861.57 L660.08 861.18 L661.37 861.18 L661.42 860.8 L662.71 860.8 L662.76 860.42 L664.05 860.42 L664.1 860.03 L665.39 860.03 L665.44 859.65 L666.73 859.65 L666.78 859.27 L668.07 859.27 L668.12 858.88 L669.41 858.88 L669.46 858.5 L670.75 858.5 L670.8 858.12 L672.09 858.12 L672.14 857.74 L673.43 857.74 L673.48 857.35 L674.77 857.35 L674.82 856.97 L676.11 856.97 L676.16 856.59 L677.45 856.59 L677.5 856.2 L678.79 856.2 L678.84 855.82 L680.13 855.82 L680.18 855.44 L681.47 855.44 L681.52 855.05 L682.81 855.05 L682.86 854.67 L684.15 854.67 L684.2 854.29 L685.49 854.29 L685.54 853.91 L686.83 853.91 L686.88 853.52 L688.17 853.52 L688.22 853.14 L689.51 853.14 L689.56 852.76 L690.85 852.76 L690.9 852.37 L692.19 852.37 L692.24 851.99 L693.53 851.99 L693.58 851.61 L694.87 851.61 L694.92 851.22 L696.21 851.22 L696.26 850.84 L697.55 850.84 L697.6 850.46 L698.89 850.46 L698.94 850.08 L700.23 850.08 L700.28 849.69 L701.57 849.69 L701.62 849.31 L702.91 849.31 L702.96 848.93 L704.25 848.93 L704.3 848.54 L705.59 848.54 L705.64 848.16 L706.93 848.16 L706.98 847.78 L708.27 847.78 L708.32 847.39 L709.61 847.39 L709.66 847.01 L710.95 847.01 L711 846.63 L712.29 846.63 L712.34 846.25 L713.63 846.25 L713.68 845.86 L714.97 845.86 L715.02 845.48 L716.31 845.48 L716.36 845.1 L717.65 845.1 L717.7 844.71 L718.99 844.71 L719.04 844.33 L720.33 844.33 L720.38 984.13 L721.67 984.13 L721.72 983.75 L723.01 983.75 L723.06 983.36 L724.35 983.36 L724.4 982.98 L725.69 982.98 L725.74 982.6 L727.03 982.6 L727.08 982.21 L728.37 982.21 L728.42 981.83 L729.71 981.83 L729.76 981.45 L731.05 981.45 L731.1 981.07 L732.39 981.07 L732.44 980.68 L733.73 980.68 L733.78 980.3 L735.07 980.3 L735.12 979.92 L736.41 979.92 L736.46 979.53 L737.75 979.53 L737.8 979.15 L739.09 979.15 L739.14 978.77 L740.43 978.77 L740.48 978.38 L741.77 978.38 L741.82 978 L743.11 978 L743.16 977.62 L744.45 977.62 L744.5 977.24 L745.79 977.24 L745.84 976.85 L747.13 976.85 L747.18 976.47 L748.47 976.47 L748.52 976.09 L749.81 976.09 L749.86 975.7 L751.15 975.7 L751.2 975.32 L752.49 975.32 L752.54 974.94 L753.83 974.94 L753.88 974.55 L755.17 974.55 L755.22 974.17 L756.51 974.17 L756.56 973.79 L757.85 973.79 L757.9 973.41 L759.19 973.41 L759.24 973.02 L760.53 973.02 L760.58 972.64 L761.87 972.64 L761.92 972.26 L763.21 972.26 L763.26 971.87 L764.55 971.87 L764.6 971.49 L765.89 971.49 L765.94 971.11 L767.23 971.11 L767.28 970.72 L768.57 970.72 L768.62 970.34 L769.91 970.34 L769.96 969.96 L771.25 969.96 L771.3 969.58 L772.59 969.58 L772.64 969.19 L773.93 969.19 L773.98 968.81 L775.27 968.81 L775.32 968.43 L776.61 968.43 L776.66 968.04 L777.95 968.04 L778 967.66 L779.29 967.66 L779.34 967.28 L780.63 967.28 L780.68 966.89 L781.97 966.89 L782.02 966.51 L783.31 966.51 L783.36 966.13 L784.65 966.13 L784.7 965.75 L785.99 965.75 L786.04 965.36 L787.33 965.36 L787.38 964.98 L788.67 964.98 L788.72 964.6 L790.01 964.6 L790.06 964.21 L791.35 964.21 L791.4 963.83 L792.69 963.83 L792.74 963.45 L794.03 963.45 L794.08 963.06 L795.37 963.06 L795.42 962.68 L796.71 962.68 L796.76 962.3 L798.05 962.3 L798.1 961.92 L799.39 961.92 L799.44 961.53 L800.73 961.53 L800.78 961.15 L802.07 961.15 L802.12 960.77 L803.41 960.77 L803.46 960.38 L804.75 960.38 L804.8 960 L806.09 960 L806.14 959.62 L807.43 959.62 L807.48 959.23 L808.77 959.23 L808.82 958.85 L810.11 958.85 L810.16 958.47 L811.45 958.47 L811.5 958.09 L812.79 958.09 L812.84 957.7 L814.13 957.7 L814.18 957.32 L815.47 957.32 L815.52 956.94 L816.81 956.94 L816.86 956.55 L818.15 956.55 L818.2 956.17 L819.49 956.17 L819.54 955.79 L820.83 955.79 L820.88 955.4 L822.17 955.4 L822.22 955.02 L823.51 955.02 L823.56 954.64 L824.85 954.64 L824.9 954.25 L826.19 954.25 L826.24 953.87 L827.53 953.87 L827.58 953.49 L828.87 953.49 L828.92 953.11 L830.21 953.11 L830.26 952.72 L831.55 952.72 L831.6 952.34 L832.89 952.34 L832.94 951.96 L834.23 951.96 L834.28 951.57 L835.57 951.57 L835.62 951.19 L836.91 951.19 L836.96 950.81 L838.25 950.81 L838.3 950.42 L839.59 950.42 L839.64 950.04 L840.93 950.04 L840.98 949.66 L842.27 949.66 L842.32 949.28 L843.61 949.28 L843.66 948.89 L844.95 948.89 L845 948.51 L846.29 948.51 L846.34 948.13 L847.63 948.13 L847.68 947.74 L848.97 947.74 L849.02 947.36 L850.31 947.36 L850.36 946.98 L851.65 946.98 L851.7 946.59 L852.99 946.59 L853.04 946.21 L854.33 946.21 L854.38 945.83 L855.67 945.83 L855.72 945.45 L857.01 945.45 L857.06 945.06 L858.35 945.06 L858.4 944.68 L859.69 944.68 L859.74 944.3 L861.03 944.3 L861.08 943.91 L862.37 943.91 L862.42 943.53 L863.71 943.53 L863.76 943.15 L865.05 943.15 L865.1 942.76 L866.39 942.76 L866.44 942.38 L867.73 942.38 L867.78 942 L869.07 942 L869.12 941.62 L870.41 941.62 L870.46 941.23 L871.75 941.23 L871.8 940.85 L873.09 940.85 L873.14 940.47 L874.43 940.47 L874.48 940.08 L875.77 940.08 L875.82 939.7 L877.11 939.7 L877.16 939.32 L878.45 939.32 L878.5 938.93 L879.79 938.93 L879.84 938.55 L881.13 938.55 L881.18 938.17 L882.47 938.17 L882.52 937.79 L883.81 937.79 L883.86 937.4 L885.15 937.4 L885.2 937.02 L886.49 937.02 L886.54 936.64 L887.83 936.64 L887.88 936.25 L889.17 936.25 L889.22 935.87 L890.51 935.87 L890.56 935.49 L891.85 935.49 L891.9 935.1 L893.19 935.1 L893.24 934.72 L894.53 934.72 L894.58 934.34 L895.87 934.34 L895.92 933.96 L897.21 933.96 L897.26 933.57 L898.55 933.57 L898.6 933.19 L899.89 933.19 L899.94 932.81 L901.23 932.81 L901.28 932.42 L902.57 932.42 L902.62 932.04 L903.91 932.04 L903.96 931.66 L905.25 931.66 L905.3 931.27 L906.59 931.27 L906.64 930.89 L907.93 930.89 L907.98 930.51 L909.27 930.51 L909.32 930.13 L910.61 930.13 L910.66 929.74 L911.95 929.74 L912 929.36 L913.29 929.36 L913.34 928.98 L914.63 928.98 L914.68 928.59 L915.97 928.59 L916.02 928.21 L917.31 928.21 L917.36 927.83 L918.65 927.83 L918.7 927.44 L919.99 927.44 L920.04 927.06 L921.33 927.06 L921.38 926.68 L922.67 926.68 L922.72 926.29 L924.01 926.29 L924.06 925.91 L925.35 925.91 L925.4 925.53 L926.69 925.53 L926.74 925.15 L928.03 925.15 L928.08 924.76 L929.37 924.76 L929.42 924.38 L930.71 924.38 L930.76 924 L932.05 924 L932.1 923.61 L933.39 923.61 L933.44 923.23 L934.73 923.23 L934.78 922.85 L936.07 922.85 L936.12 922.46 L937.41 922.46 L937.46 922.08 L938.75 922.08 L938.8 921.7 L940.09 921.7 L940.14 921.32 L941.43 921.32 L941.48 920.93 L942.77 920.93 L942.82 920.55 L944.11 920.55 L944.16 920.17 L945.45 920.17 L945.5 919.78 L946.79 919.78 L946.84 919.4 L948.13 919.4 L948.18 919.02 L949.47 919.02 L949.52 918.63 L950.81 918.63 L950.86 918.25 L952.15 918.25 L952.2 917.87 L953.49 917.87 L953.54 917.49 L954.83 917.49 L954.88 917.1 L956.17 917.1 L956.22 916.72 L957.51 916.72 L957.56 916.34 L958.85 916.34 L958.9 915.95 L960.19 915.95 L960.24 915.57 L961.53 915.57 L961.58 915.19 L962.87 915.19 L962.92 914.8 L964.21 914.8 L964.26 914.42 L965.55 914.42 L965.6 914.04 L966.89 914.04 L966.94 913.66 L968.23 913.66 L968.28 913.27 L969.57 913.27 L969.62 912.89 L970.91 912.89 L970.96 912.51 L972.25 912.51 L972.3 912.12 L973.59 912.12 L973.64 911.74 L974.93 911.74 L974.98 911.36 L976.27 911.36 L976.32 910.97 L977.61 910.97 L977.66 910.59 L978.95 910.59 L979 910.21 L980.29 910.21 L980.34 909.83 L981.63 909.83 L981.68 909.44 L982.97 909.44 L983.02 909.06 L984.31 909.06 L984.36 908.68 L985.65 908.68 L985.7 908.29 L986.99 908.29 L987.04 907.91 L988.33 907.91 L988.38 907.53 L989.67 907.53 L989.72 907.14 L991.01 907.14 L991.06 906.76 L992.35 906.76 L992.4 906.38 L993.69 906.38 L993.74 906 L995.03 906 L995.08 905.61 L996.37 905.61 L996.42 905.23 L997.71 905.23 L997.77 904.85 L999.05 904.85 L999.11 904.46 L1000.39 904.46 L1000.45 904.08 L1001.73 904.08 L1001.79 903.7 L1003.07 903.7 L1003.13 903.31 L1004.41 903.31 L1004.47 902.93 L1005.75 902.93 L1005.81 902.55 L1007.09 902.55 L1007.15 902.17 L1008.43 902.17 L1008.49 901.78 L1009.77 901.78 L1009.83 901.4 L1011.11 901.4 L1011.17 901.02 L1012.45 901.02 L1012.51 900.63 L1013.79 900.63 L1013.85 900.25 L1015.13 900.25 L1015.19 899.87 L1016.47 899.87 L1016.53 899.48 L1017.81 899.48 L1017.87 899.1 L1019.15 899.1 L1019.21 898.72 L1020.49 898.72 L1020.55 898.33 L1021.83 898.33 L1021.89 897.95 L1023.17 897.95 L1023.23 897.57 L1024.51 897.57 L1024.57 897.19 L1025.85 897.19 L1025.91 896.8 L1027.19 896.8 L1027.25 896.42 L1028.53 896.42 L1028.59 896.04 L1029.87 896.04 L1029.93 895.65 L1031.21 895.65 L1031.27 895.27 L1032.55 895.27 L1032.61 894.89 L1033.89 894.89 L1033.95 894.5 L1035.23 894.5 L1035.29 894.12 L1036.57 894.12 L1036.63 893.74 L1037.91 893.74 L1037.97 893.36 L1039.25 893.36 L1039.31 892.97 L1040.59 892.97 L1040.65 892.59 L1041.93 892.59 L1041.99 892.21 L1043.27 892.21 L1043.33 891.82 L1044.61 891.82 L1044.67 891.44 L1045.95 891.44 L1046.01 891.06 L1047.29 891.06 L1047.35 890.67 L1048.63 890.67 L1048.69 890.29 L1049.97 890.29 L1050.03 889.91 L1051.31 889.91 L1051.37 889.53 L1052.65 889.53 L1052.71 889.14 L1053.99 889.14 L1054.05 888.76 L1055.33 888.76 L1055.39 888.38 L1056.67 888.38 L1056.73 887.99 L1058.01 887.99 L1058.07 887.61 L1059.35 887.61 L1059.41 887.23 L1060.69 887.23 L1060.75 886.84 L1062.03 886.84 L1062.09 886.46 L1063.37 886.46 L1063.43 886.08 L1064.71 886.08 L1064.77 885.7 L1066.05 885.7 L1066.11 885.31 L1067.39 885.31 L1067.45 884.93 L1068.73 884.93 L1068.79 884.55 L1070.07 884.55 L1070.13 884.16 L1071.41 884.16 L1071.47 883.78 L1072.75 883.78 L1072.81 883.4 L1074.09 883.4 L1074.15 883.01 L1075.43 883.01 L1075.49 882.63 L1076.77 882.63 L1076.83 882.25 L1078.11 882.25 L1078.17 881.87 L1079.45 881.87 L1079.51 881.48 L1080.79 881.48 L1080.85 881.1 L1082.13 881.1 L1082.19 880.72 L1083.47 880.72 L1083.53 880.33 L1084.81 880.33 L1084.87 879.95 L1086.15 879.95 L1086.21 879.57 L1087.49 879.57 L1087.55 879.18 L1088.83 879.18 L1088.89 878.8 L1090.17 878.8 L1090.23 878.42 L1091.51 878.42 L1091.57 878.04 L1092.85 878.04 L1092.91 877.65 L1094.19 877.65 L1094.25 877.27 L1095.53 877.27 L1095.59 876.89 L1096.87 876.89 L1096.93 876.5 L1098.21 876.5 L1098.27 876.12 L1099.55 876.12 L1099.61 875.74 L1100.89 875.74 L1100.95 875.35 L1102.23 875.35 L1102.29 874.97 L1103.57 874.97 L1103.63 874.59 L1104.91 874.59 L1104.97 874.21 L1106.25 874.21 L1106.31 873.82 L1107.59 873.82 L1107.65 873.44 L1108.93 873.44 L1108.99 873.06 L1110.27 873.06 L1110.33 872.67 L1111.61 872.67 L1111.67 872.29 L1112.95 872.29 L1113.01 871.91 L1114.29 871.91 L1114.35 871.52 L1115.63 871.52 L1115.69 871.14 L1116.97 871.14 L1117.03 870.76 L1118.31 870.76 L1118.37 870.37 L1119.65 870.37 L1119.71 869.99 L1120.99 869.99 L1121.05 869.61 L1122.33 869.61 L1122.39 869.23 L1123.67 869.23 L1123.73 868.84 L1125.01 868.84 L1125.07 868.46 L1126.35 868.46 L1126.41 868.08 L1127.69 868.08 L1127.75 867.69 L1129.03 867.69 L1129.09 867.31 L1130.37 867.31 L1130.43 866.93 L1131.71 866.93 L1131.77 866.54 L1133.05 866.54 L1133.11 866.16 L1134.39 866.16 L1134.45 865.78 L1135.73 865.78 L1135.79 865.4 L1137.07 865.4 L1137.13 865.01 L1138.41 865.01 L1138.47 864.63 L1139.75 864.63 L1139.81 864.25 L1141.09 864.25 L1141.15 863.86 L1142.43 863.86 L1142.49 863.48 L1143.77 863.48 L1143.83 863.1 L1145.11 863.1 L1145.17 862.71 L1146.45 862.71 L1146.51 862.33 L1147.79 862.33 L1147.85 861.95 L1149.13 861.95 L1149.19 861.57 L1150.47 861.57 L1150.53 861.18 L1151.81 861.18 L1151.87 860.8 L1153.15 860.8 L1153.21 860.42 L1154.49 860.42 L1154.55 860.03 L1155.83 860.03 L1155.89 859.65 L1157.17 859.65 L1157.23 859.27 L1158.51 859.27 L1158.57 858.88 L1159.85 858.88 L1159.91 858.5 L1161.19 858.5 L1161.25 858.12 L1162.53 858.12 L1162.59 857.74 L1163.87 857.74 L1163.93 857.35 L1165.21 857.35 L1165.27 856.97 L1166.55 856.97 L1166.61 856.59 L1167.89 856.59 L1167.95 856.2 L1169.23 856.2 L1169.29 855.82 L1170.57 855.82 L1170.63 855.44 L1171.91 855.44 L1171.97 855.05 L1173.25 855.05 L1173.31 854.67 L1174.59 854.67 L1174.65 854.29 L1175.93 854.29 L1175.99 853.91 L1177.27 853.91 L1177.33 853.52 L1178.61 853.52 L1178.67 853.14 L1179.95 853.14 L1180.01 852.76 L1181.29 852.76 L1181.35 852.37 L1182.63 852.37 L1182.69 851.99 L1183.97 851.99 L1184.03 851.61 L1185.31 851.61 L1185.37 851.22 L1186.65 851.22 L1186.71 850.84 L1187.99 850.84 L1188.05 850.46 L1189.33 850.46 L1189.39 850.08 L1190.67 850.08 L1190.73 849.69 L1192.01 849.69 L1192.07 849.31 L1193.35 849.31 L1193.41 848.93 L1194.69 848.93 L1194.75 848.54 L1196.03 848.54 L1196.09 848.16 L1197.37 848.16 L1197.43 847.78 L1198.71 847.78 L1198.77 847.39 L1200.05 847.39 L1200.11 847.01 L1201.39 847.01 L1201.45 846.63 L1202.73 846.63 L1202.79 846.25 L1204.07 846.25 L1204.13 845.86 L1205.41 845.86 L1205.47 845.48 L1206.75 845.48 L1206.81 845.1 L1208.09 845.1 L1208.15 844.71 L1209.43 844.71 L1209.49 984.13 L1210.77 984.13 L1210.83 983.75 L1212.11 983.75 L1212.17 983.36 L1213.45 983.36 L1213.51 982.98 L1214.79 982.98 L1214.85 982.6 L1216.13 982.6 L1216.19 982.21 L1217.47 982.21 L1217.53 981.83 L1218.81 981.83 L1218.87 981.45 L1220.15 981.45 L1220.21 981.07 L1221.49 981.07 L1221.55 980.68 L1222.83 980.68 L1222.89 980.3 L1224.17 980.3 L1224.23 979.92 L1225.51 979.92 L1225.57 979.53 L1226.85 979.53 L1226.91 979.15 L1228.19 979.15 L1228.25 978.77 L1229.53 978.77 L1229.59 978.38 L1230.87 978.38 L1230.93 978 L1232.21 978 L1232.27 977.62 L1233.55 977.62 L1233.61 977.24 L1234.89 977.24 L1234.95 976.85 L1236.23 976.85 L1236.29 976.47 L1237.57 976.47 L1237.63 976.09 L1238.91 976.09 L1238.97 975.7 L1240.25 975.7 L1240.31 975.32 L1241.59 975.32 L1241.65 974.94 L1242.93 974.94 L1242.99 974.55 L1244.27 974.55 L1244.33 974.17 L1245.61 974.17 L1245.67 973.79 L1246.95 973.79 L1247.01 973.41 L1248.29 973.41 L1248.35 973.02 L1249.63 973.02 L1249.69 972.64 L1250.97 972.64 L1251.03 972.26 L1252.31 972.26 L1252.37 971.87 L1253.65 971.87 L1253.71 971.49 L1254.99 971.49 L1255.05 971.11 L1256.33 971.11 L1256.39 970.72 L1257.67 970.72 L1257.73 970.34 L1259.01 970.34 L1259.07 969.96 L1260.35 969.96 L1260.41 969.58 L1261.69 969.58 L1261.75 969.19 L1263.03 969.19 L1263.09 968.81 L1264.37 968.81 L1264.43 968.43 L1265.71 968.43 L1265.77 968.04 L1267.05 968.04 L1267.11 967.66 L1268.39 967.66 L1268.45 967.28 L1269.73 967.28 L1269.79 966.89 L1271.07 966.89 L1271.13 966.51 L1272.41 966.51 L1272.47 966.13 L1273.75 966.13 L1273.81 965.75 L1275.09 965.75 L1275.15 965.36 L1276.43 965.36 L1276.49 964.98 L1277.77 964.98 L1277.83 964.6 L1279.11 964.6 L1279.17 964.21 L1280.45 964.21 L1280.51 963.83 L1281.79 963.83 L1281.85 963.45 L1283.13 963.45 L1283.19 963.06 L1284.47 963.06 L1284.53 962.68 L1285.81 962.68 L1285.87 962.3 L1287.15 962.3 L1287.21 961.92 L1288.49 961.92 L1288.55 961.53 L1289.83 961.53 L1289.89 961.15 L1291.17 961.15 L1291.23 960.77 L1292.51 960.77 L1292.57 960.38 L1293.85 960.38 L1293.91 960 L1295.19 960 L1295.25 959.62 L1296.53 959.62 L1296.59 959.23 L1297.87 959.23 L1297.93 958.85 L1299.21 958.85 L1299.27 958.47 L1300.55 958.47 L1300.61 958.09 L1301.89 958.09 L1301.95 957.7 L1303.23 957.7 L1303.29 957.32 L1304.57 957.32 L1304.63 956.94 L1305.91 956.94 L1305.97 956.55 L1307.25 956.55 L1307.31 956.17 L1308.59 956.17 L1308.65 955.79 L1309.93 955.79 L1309.99 955.4 L1311.27 955.4 L1311.33 955.02 L1312.61 955.02 L1312.67 954.64 L1313.95 954.64 L1314.01 954.25 L1315.29 954.25 L1315.35 953.87 L1316.63 953.87 L1316.69 953.49 L1317.97 953.49 L1318.03 953.11 L1319.31 953.11 L1319.37 952.72 L1320.65 952.72 L1320.71 952.34 L1321.99 952.34 L1322.05 951.96 L1323.33 951.96 L1323.39 951.57 L1324.67 951.57 L1324.73 951.19 L1326.01 951.19 L1326.07 950.81 L1327.35 950.81 L1327.41 950.42 L1328.69 950.42 L1328.75 950.04 L1330.03 950.04 L1330.09 949.66 L1331.37 949.66 L1331.43 949.28 L1332.71 949.28 L1332.77 948.89 L1334.05 948.89 L1334.11 948.51 L1335.39 948.51 L1335.45 948.13 L1336.73 948.13 L1336.79 947.74 L1338.07 947.74 L1338.13 947.36 L1339.41 947.36 L1339.47 946.98 L1340.75 946.98 L1340.81 946.59 L1342.09 946.59 L1342.15 946.21 L1343.43 946.21 L1343.49 945.83 L1344.77 945.83 L1344.83 945.45 L1346.11 945.45 L1346.17 945.06 L1347.45 945.06 L1347.51 944.68 L1348.79 944.68 L1348.85 944.3 L1350.13 944.3 L1350.19 943.91 L1351.47 943.91 L1351.53 943.53 L1352.81 943.53 L1352.87 943.15 L1354.15 943.15 L1354.21 942.76 L1355.49 942.76 L1355.55 942.38 L1356.83 942.38 L1356.89 942 L1358.17 942 L1358.23 941.62 L1359.51 941.62 L1359.57 941.23 L1360.85 941.23 L1360.91 940.85 L1362.19 940.85 L1362.25 940.47 L1363.53 940.47 L1363.59 940.08 L1364.87 940.08 L1364.93 939.7 L1366.21 939.7 L1366.27 939.32 L1367.55 939.32 L1367.61 938.93 L1368.89 938.93 L1368.95 938.55 L1370.23 938.55 L1370.29 938.17 L1371.57 938.17 L1371.63 937.79 L1372.91 937.79 L1372.97 937.4 L1374.25 937.4 L1374.31 937.02 L1375.59 937.02 L1375.65 936.64 L1376.93 936.64 L1376.99 936.25 L1378.27 936.25 L1378.33 935.87 L1379.61 935.87 L1379.67 935.49 L1380.95 935.49 L1381.01 935.1 L1382.29 935.1 L1382.35 934.72 L1383.63 934.72 L1383.69 934.34 L1384.97 934.34 L1385.03 933.96 L1386.31 933.96 L1386.37 933.57 L1387.65 933.57 L1387.71 933.19 L1388.99 933.19 L1389.05 932.81 L1390.33 932.81 L1390.39 932.42 L1391.67 932.42 L1391.73 932.04 L1393.01 932.04 L1393.07 931.66 L1394.35 931.66 L1394.41 931.27 L1395.69 931.27 L1395.75 930.89 L1397.03 930.89 L1397.09 930.51 L1398.37 930.51 L1398.43 930.13 L1399.71 930.13 L1399.77 929.74 L1401.05 929.74 L1401.11 929.36 L1402.39 929.36 L1402.45 928.98 L1403.73 928.98 L1403.79 928.59 L1405.07 928.59"/>
<path clip-path="url(#c5)" d="M229.94 1139.5 L239.26 1139.5 L239.32 1136.81 L248.64 1136.81 L248.7 1134.12 L258.02 1134.12 L258.08 1131.43 L267.4 1131.43 L267.46 1128.75 L276.78 1128.75 L276.84 1126.06 L286.16 1126.06 L286.22 1123.37 L295.54 1123.37 L295.6 1120.68 L304.92 1120.68 L304.98 1117.99 L314.3 1117.99 L314.36 1115.3 L323.68 1115.3 L323.74 1112.62 L333.06 1112.62 L333.12 1109.93 L342.44 1109.93 L342.5 1107.24 L351.82 1107.24 L351.88 1104.55 L361.2 1104.55 L361.26 1101.86 L370.58 1101.86 L370.64 1099.17 L379.96 1099.17 L380.02 1096.48 L389.34 1096.48 L389.4 1093.8 L398.72 1093.8 L398.78 1091.11 L408.1 1091.11 L408.16 1088.42 L417.48 1088.42 L417.54 1085.73 L426.86 1085.73 L426.92 1083.04 L436.24 1083.04 L436.3 1080.35 L445.62 1080.35 L445.68 1077.67 L455 1077.67 L455.06 1074.98 L464.38 1074.98 L464.44 1072.29 L473.76 1072.29 L473.82 1069.6 L483.14 1069.6 L483.2 1066.91 L492.52 1066.91 L492.58 1064.22 L501.9 1064.22 L501.96 1061.53 L511.28 1061.53 L511.34 1058.85 L520.66 1058.85 L520.72 1056.16 L530.04 1056.16 L530.1 1053.47 L539.42 1053.47 L539.48 1050.78 L548.8 1050.78 L548.86 1048.09 L558.18 1048.09 L558.24 1045.4 L567.56 1045.4 L567.62 1042.72 L576.94 1042.72 L577 1040.03 L586.32 1040.03 L586.38 1037.34 L595.7 1037.34 L595.76 1034.65 L605.08 1034.65 L605.14 1031.96 L614.46 1031.96 L614.52 1029.27 L623.84 1029.27 L623.9 1026.58 L633.22 1026.58 L633.28 1023.9 L642.6 1023.9 L642.66 1021.21 L651.99 1021.21 L652.04 1018.52 L661.37 1018.52 L661.42 1015.83 L670.75 1015.83 L670.8 1013.14 L680.13 1013.14 L680.18 1010.45 L689.51 1010.45 L689.56 1007.77 L698.89 1007.77 L698.94 1005.08 L708.27 1005.08 L708.32 1002.39 L717.65 1002.39 L717.7 999.7 L720.33 999.7 L720.38 1139.5 L727.03 1139.5 L727.08 1136.81 L736.41 1136.81 L736.46 1134.12 L745.79 1134.12 L745.84 1131.43 L755.17 1131.43 L755.22 1128.75 L764.55 1128.75 L764.6 1126.06 L773.93 1126.06 L773.98 1123.37 L783.31 1123.37 L783.36 1120.68 L792.69 1120.68 L792.74 1117.99 L802.07 1117.99 L802.12 1115.3 L811.45 1115.3 L811.5 1112.62 L820.83 1112.62 L820.88 1109.93 L830.21 1109.93 L830.26 1107.24 L839.59 1107.24 L839.64 1104.55 L848.97 1104.55 L849.02 1101.86 L858.35 1101.86 L858.4 1099.17 L867.73 1099.17 L867.78 1096.48 L877.11 1096.48 L877.16 1093.8 L886.49 1093.8 L886.54 1091.11 L895.87 1091.11 L895.92 1088.42 L905.25 1088.42 L905.3 1085.73 L914.63 1085.73 L914.68 1083.04 L924.01 1083.04 L924.06 1080.35 L933.39 1080.35 L933.44 1077.67 L942.77 1077.67 L942.82 1074.98 L952.15 1074.98 L952.2 1072.29 L961.53 1072.29 L961.58 1069.6 L970.91 1069.6 L970.96 1066.91 L980.29 1066.91 L980.34 1064.22 L989.67 1064.22 L989.72 1061.53 L999.05 1061.53 L999.11 1058.85 L1008.43 1058.85 L1008.49 1056.16 L1017.81 1056.16 L1017.87 1053.47 L1027.19 1053.47 L1027.25 1050.78 L1036.57 1050.78 L1036.63 1048.09 L1045.95 1048.09 L1046.01 1045.4 L1055.33 1045.4 L1055.39 1042.72 L1064.71 1042.72 L1064.77 1040.03 L1074.09 1040.03 L1074.15 1037.34 L1083.47 1037.34 L1083.53 1034.65 L1092.85 1034.65 L1092.91 1031.96 L1102.23 1031.96 L1102.29 1029.27 L1111.61 1029.27 L1111.67 1026.58 L1120.99 1026.58 L1121.05 1023.9 L1130.37 1023.9 L1130.43 1021.21 L1139.75 1021.21 L1139.81 1018.52 L1149.13 1018.52 L1149.19 1015.83 L1158.51 1015.83 L1158.57 1013.14 L1167.89 1013.14 L1167.95 1010.45 L1177.27 1010.45 L1177.33 1007.77 L1186.65 1007.77 L1186.71 1005.08 L1196.03 1005.08 L1196.09 1002.39 L1205.41 1002.39 L1205.47 999.7 L1209.43 999.7 L1209.49 1139.5 L1214.79 1139.5 L1214.85 1136.81 L1224.17 1136.81 L1224.23 1134.12 L1233.55 1134.12 L1233.61 1131.43 L1242.93 1131.43 L1242.99 1128.75 L1252.31 1128.75 L1252.37 1126.06 L1261.69 1126.06 L1261.75 1123.37 L1271.07 1123.37 L1271.13 1120.68 L1280.45 1120.68 L1280.51 1117.99 L1289.83 1117.99 L1289.89 1115.3 L1299.21 1115.3 L1299.27 1112.62 L1308.59 1112.62 L1308.65 1109.93 L1317.97 1109.93 L1318.03 1107.24 L1327.35 1107.24 L1327.41 1104.55 L1336.73 1104.55 L1336.79 1101.86 L1346.11 1101.86 L1346.17 1099.17 L1355.49 1099.17 L1355.55 1096.48 L1364.87 1096.48 L1364.93 1093.8 L1374.25 1093.8 L1374.31 1091.11 L1383.63 1091.11 L1383.69 1088.42 L1393.01 1088.42 L1393.07 1085.73 L1402.39 1085.73 L1402.45 1083.04 L1405.07 1083.04"/>
</g>
<rect x="230.98" y="533.89" width="1174.09" height="139.05" fill="#1271C0"/>
<path d="M231.5 533.99v5.9M239.54 533.99v5.9M243.56 533.99v5.9M247.58 533.99v5.9M255.62 533.99v5.9M259.64 533.99v5.9M263.66 533.99v5.9M271.7 533.99v5.9M275.72 533.99v5.9M279.74 533.99v5.9M287.78 533.99v11.4M291.8 533.99v5.9M295.82 533.99v5.9M303.86 533.99v5.9M307.88 533.99v5.9M311.9 533.99v5.9M319.94 533.99v5.9M323.96 533.99v5.9M327.98 533.99v5.9M336.02 533.99v5.9M340.04 533.99v5.9M344.06 533.99v5.9M352.1 533.99v11.4M356.12 533.99v5.9M360.14 533.99v5.9M368.18 533.99v5.9M372.2 533.99v5.9M376.22 533.99v5.9M384.26 533.99v5.9M388.28 533.99v5.9M392.3 533.99v5.9M400.34 533.99v5.9M404.36 533.99v5.9M408.38 533.99v5.9M416.42 533.99v11.4M420.44 533.99v5.9M424.46 533.99v5.9M432.5 533.99v5.9M436.52 533.99v5.9M440.54 533.99v5.9M448.58 533.99v5.9M452.6 533.99v5.9M456.62 533.99v5.9M464.66 533.99v5.9M468.68 533.99v5.9M472.7 533.99v5.9M480.74 533.99v11.4M484.76 533.99v5.9M488.78 533.99v5.9M496.82 533.99v5.9M500.84 533.99v5.9M504.86 533.99v5.9M512.9 533.99v5.9M516.92 533.99v5.9M520.94 533.99v5.9M528.98 533.99v5.9M533 533.99v5.9M537.02 533.99v5.9M545.06 533.99v11.4M549.08 533.99v5.9M553.1 533.99v5.9M561.14 533.99v5.9M565.16 533.99v5.9M569.18 533.99v5.9M577.22 533.99v5.9M581.24 533.99v5.9M585.26 533.99v5.9M593.3 533.99v5.9M597.32 533.99v5.9M601.34 533.99v5.9M609.38 533.99v11.4M613.4 533.99v5.9M617.42 533.99v5.9M625.46 533.99v5.9M629.48 533.99v5.9M633.5 533.99v5.9M641.54 533.99v5.9M645.56 533.99v5.9M649.58 533.99v5.9M657.62 533.99v5.9M661.64 533.99v5.9M665.66 533.99v5.9M673.7 533.99v11.4M677.72 533.99v5.9M681.74 533.99v5.9M689.78 533.99v5.9M693.8 533.99v5.9M697.82 533.99v5.9M705.86 533.99v5.9M709.88 533.99v5.9M713.9 533.99v5.9M721.94 533.99v5.9M725.96 533.99v5.9M729.98 533.99v5.9M738.02 533.99v11.4M742.04 533.99v5.9M746.06 533.99v5.9M754.1 533.99v5.9M758.12 533.99v5.9M762.14 533.99v5.9M770.18 533.99v5.9M774.2 533.99v5.9M778.22 533.99v5.9M786.26 533.99v5.9M790.28 533.99v5.9M794.3 533.99v5.9M802.34 533.99v11.4M806.36 533.99v5.9M810.38 533.99v5.9M818.42 533.99v5.9M822.44 533.99v5.9M826.46 533.99v5.9M834.5 533.99v5.9M838.52 533.99v5.9M842.54 533.99v5.9M850.58 533.99v5.9M854.6 533.99v5.9M858.62 533.99v5.9M866.66 533.99v11.4M870.68 533.99v5.9M874.7 533.99v5.9M882.74 533.99v5.9M886.76 533.99v5.9M890.78 533.99v5.9M898.82 533.99v5.9M902.84 533.99v5.9M906.86 533.99v5.9M914.9 533.99v5.9M918.92 533.99v5.9M922.94 533.99v5.9M930.98 533.99v11.4M935 533.99v5.9M939.02 533.99v5.9M947.06 533.99v5.9M951.08 533.99v5.9M955.1 533.99v5.9M963.14 533.99v5.9M967.16 533.99v5.9M971.18 533.99v5.9M979.22 533.99v5.9M983.24 533.99v5.9M987.26 533.99v5.9M995.3 533.99v11.4M999.32 533.99v5.9M1003.34 533.99v5.9M1011.38 533.99v5.9M1015.4 533.99v5.9M1019.42 533.99v5.9M1027.46 533.99v5.9M1031.48 533.99v5.9M1035.5 533.99v5.9M1043.54 533.99v5.9M1047.56 533.99v5.9M1051.58 533.99v5.9M1059.62 533.99v11.4M1063.64 533.99v5.9M1067.66 533.99v5.9M1075.7 533.99v5.9M1079.72 533.99v5.9M1083.74 533.99v5.9M1091.78 533.99v5.9M1095.8 533.99v5.9M1099.82 533.99v5.9M1107.86 533.99v5.9M1111.88 533.99v5.9M1115.9 533.99v5.9M1123.94 533.99v11.4M1127.96 533.99v5.9M1131.98 533.99v5.9M1140.02 533.99v5.9M1144.04 533.99v5.9M1148.06 533.99v5.9M1156.1 533.99v5.9M1160.12 533.99v5.9M1164.14 533.99v5.9M1172.18 533.99v5.9M1176.2 533.99v5.9M1180.22 533.99v5.9M1188.26 533.99v11.4M1192.28 533.99v5.9M1196.3 533.99v5.9M1204.34 533.99v5.9M1208.36 533.99v5.9M1212.38 533.99v5.9M1220.42 533.99v5.9M1224.44 533.99v5.9M1228.46 533.99v5.9M1236.5 533.99v5.9M1240.52 533.99v5.9M1244.54 533.99v5.9M1252.58 533.99v11.4M1256.6 533.99v5.9M1260.62 533.99v5.9M1268.66 533.99v5.9M1272.68 533.99v5.9M1276.7 533.99v5.9M1284.74 533.99v5.9M1288.76 533.99v5.9M1292.78 533.99v5.9M1300.82 533.99v5.9M1304.84 533.99v5.9M1308.86 533.99v5.9M1316.9 533.99v11.4M1320.92 533.99v5.9M1324.94 533.99v5.9M1332.98 533.99v5.9M1337 533.99v5.9M1341.02 533.99v5.9M1349.06 533.99v5.9M1353.08 533.99v5.9M1357.1 533.99v5.9M1365.14 533.99v5.9M1369.16 533.99v5.9M1373.18 533.99v5.9M1381.22 533.99v11.4M1385.24 533.99v5.9M1389.26 533.99v5.9M1397.3 533.99v5.9M1401.32 533.99v5.9" stroke="#fff" stroke-opacity="0.3" stroke-width="1" fill="none"/>
<path transform="translate(660.2 102.8) scale(0.011719 -0.011719)" d="M583 0V1147Q518 1085 412 1023Q307 961 223 930V1104Q374 1175 487 1276Q600 1377 647 1472H763V0Z" fill="#1a1a1a"/>
<g fill="none" stroke="#646464" stroke-width="2" stroke-linejoin="miter" stroke-miterlimit="2">
<path d="M1331.6 204 L1346.9 185.9 L1354 194.4 L1354 190 L1358 190 L1358 198.4 L1362.3 204 L1358 204 L1358 216 L1350 216 L1350 205.8 L1344 205.8 L1344 216 L1336 216 L1336 204 Z"/>
</g>
<rect x="1368" y="182" width="38" height="38" rx="9.5" fill="#dadada" stroke="#767676" stroke-width="2"/>
<g fill="none" stroke="#646464" stroke-width="2" stroke-linecap="round"><path d="M1373.8 188.8 L1386.2 201 L1373.8 213.4"/><path d="M1387.8 188.8 L1400.4 201 L1387.8 213.4"/></g>
</svg>
</body></html>
